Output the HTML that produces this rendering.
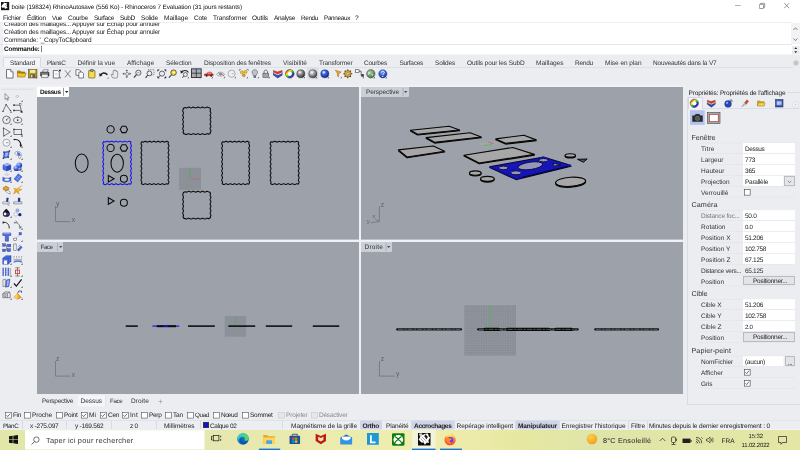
<!DOCTYPE html>
<html lang="fr"><head><meta charset="utf-8"><title>boite - Rhinoceros 7</title>
<style>
html,body{margin:0;padding:0;}
body{width:800px;height:450px;overflow:hidden;position:relative;background:#fff;font-family:"Liberation Sans", sans-serif;}
#r{position:absolute;left:0;top:0;width:800px;height:450px;overflow:hidden;will-change:transform;}
#r div,#r span,#r svg{position:absolute;}
#r span{white-space:nowrap;line-height:1;text-rendering:geometricPrecision;}
#r svg{overflow:visible;}
#r svg text{font-family:"Liberation Sans", sans-serif;}
#r svg.b{filter:blur(0.28px);}
</style></head><body><div id="r">
<svg style="left:0px;top:0px" width="800" height="55"><rect x="0.00" y="0.00" width="800.00" height="54.50" fill="#fff"/></svg>
<svg class="b" style="left:0.9px;top:1.6px;" width="8.2" height="8.2" viewBox="0 0 9 9"><rect x="0" y="0" width="9" height="9" fill="#161616"/><path d="M0.4 5.6C0.8 3.6 1.8 2.2 3.2 1.4L2.8 0.3L4.6 1.1C5.6 0.9 6.4 1.2 7 1.9L6 2.6C6.6 3.4 6.6 4.4 6.2 5.2L7.6 6.8L6.2 6.6L4.4 7.6L3.8 6L1.6 6.4Z" fill="#fff"/><path d="M4.6 3.2L5.6 3.6L4.8 4.2Z" fill="#161616"/></svg>
<span style="left:11.5px;top:5px;font-size:6.35px;letter-spacing:-0.104px;color:#111;">boite (198324) RhinoAutosave (556 Ko) - Rhinoceros 7 Evaluation (31 jours restants)</span>
<svg style="left:735px;top:5px" width="6" height="1"><rect x="0.00" y="0.15" width="5.70" height="0.55" fill="#777"/></svg>
<svg class="b" style="left:759px;top:3.2px;" width="6" height="6" viewBox="0 0 6 6"><rect x="0.3" y="1.3" width="4.2" height="4.2" rx="0.5" fill="none" stroke="#555" stroke-width="0.6"/><path d="M1.4 1.3V0.9Q1.4 0.3 2 0.3H5.1Q5.7 0.3 5.7 0.9V4Q5.7 4.6 5.1 4.6H4.5" fill="none" stroke="#555" stroke-width="0.6"/></svg>
<svg class="b" style="left:784px;top:3.2px;" width="5.4" height="5.4" viewBox="0 0 5.4 5.4"><path d="M0.2 0.2L5.2 5.2M5.2 0.2L0.2 5.2" stroke="#555" stroke-width="0.6"/></svg>
<span style="left:4px;top:22px;font-size:6.5px;letter-spacing:-0.189px;color:#222;">Création des maillages... Appuyer sur Échap pour annuler</span>
<svg style="left:0px;top:11px" width="800" height="12"><rect x="0.00" y="0.00" width="800.00" height="11.50" fill="#fff"/></svg>
<span style="left:3px;top:16px;font-size:6.5px;letter-spacing:-0.217px;color:#111;">Fichier</span>
<span style="left:27px;top:16px;font-size:6.5px;letter-spacing:-0.125px;color:#111;">Édition</span>
<span style="left:52px;top:16px;font-size:6.32px;letter-spacing:-0.340px;color:#111;">Vue</span>
<span style="left:68px;top:16px;font-size:6.5px;letter-spacing:-0.221px;color:#111;">Courbe</span>
<span style="left:94px;top:16px;font-size:6.49px;letter-spacing:-0.340px;color:#111;">Surface</span>
<span style="left:120px;top:16px;font-size:6.5px;letter-spacing:-0.316px;color:#111;">SubD</span>
<span style="left:141px;top:16px;font-size:6.5px;letter-spacing:-0.180px;color:#111;">Solide</span>
<span style="left:164px;top:16px;font-size:6.5px;letter-spacing:-0.027px;color:#111;">Maillage</span>
<span style="left:194px;top:16px;font-size:6.5px;letter-spacing:-0.184px;color:#111;">Cote</span>
<span style="left:213px;top:16px;font-size:6.5px;letter-spacing:-0.105px;color:#111;">Transformer</span>
<span style="left:252px;top:16px;font-size:6.5px;letter-spacing:-0.104px;color:#111;">Outils</span>
<span style="left:274px;top:16px;font-size:6.5px;letter-spacing:-0.304px;color:#111;">Analyse</span>
<span style="left:301px;top:16px;font-size:6.35px;letter-spacing:-0.340px;color:#111;">Rendu</span>
<span style="left:324px;top:16px;font-size:6.38px;letter-spacing:-0.340px;color:#111;">Panneaux</span>
<span style="left:355px;top:16px;font-size:6.5px;letter-spacing:0.175px;color:#111;">?</span>
<svg style="left:0px;top:22px" width="792" height="1"><rect x="0.00" y="0.30" width="792.00" height="0.50" fill="#d9dce6"/></svg>
<svg style="left:0px;top:22px" width="3" height="33"><rect x="0.00" y="0.60" width="2.70" height="32.00" fill="#eff1f6"/></svg>
<svg style="left:2px;top:22px" width="2" height="33"><rect x="0.60" y="0.60" width="0.50" height="32.00" fill="#dde1ec"/></svg>
<span style="left:4px;top:30px;font-size:6.5px;letter-spacing:-0.189px;color:#222;">Création des maillages... Appuyer sur Échap pour annuler</span>
<span style="left:4px;top:38px;font-size:6.5px;letter-spacing:-0.164px;color:#222;">Commande: &#x27;_CopyToClipboard</span>
<svg style="left:0px;top:44px" width="792" height="1"><rect x="0.00" y="0.20" width="792.00" height="0.60" fill="#d3d7e3"/></svg>
<span style="left:4px;top:47px;font-size:6.5px;letter-spacing:-0.229px;color:#111;font-weight:bold;">Commande:</span>
<svg style="left:41px;top:45px" width="1" height="8"><rect x="0.00" y="0.80" width="0.60" height="6.50" fill="#333"/></svg>
<svg style="left:791px;top:22px" width="9" height="23"><rect x="0.00" y="0.80" width="9.00" height="21.50" fill="#f3f3f5"/></svg>
<svg class="b" style="left:792.5px;top:26.5px;" width="5" height="3.4" viewBox="0 0 5 3.4"><path d="M0.5 2.9L2.5 0.8L4.5 2.9" fill="none" stroke="#444" stroke-width="0.65"/></svg>
<svg class="b" style="left:792.5px;top:37.8px;" width="5" height="3.4" viewBox="0 0 5 3.4"><path d="M0.5 0.5L2.5 2.6L4.5 0.5" fill="none" stroke="#444" stroke-width="0.65"/></svg>
<svg class="b" style="left:791.5px;top:45.6px;" width="7.5" height="8" viewBox="0 0 7.5 8"><rect x="0" y="0" width="7.5" height="8" fill="#e9eaee"/><path d="M0 4H7.5" stroke="#fff" stroke-width="0.5"/><path d="M2.3 2.9L3.75 1.2L5.2 2.9Z M2.3 5.2L3.75 6.9L5.2 5.2Z" fill="#222"/></svg>
<svg style="left:0px;top:54px" width="800" height="33"><rect x="0.00" y="0.50" width="800.00" height="32.50" fill="#ecedf1"/></svg>
<div style="left:2.5px;top:57.2px;width:38.5px;height:10.3px;background:#f4f5f8;border:0.5px solid #d5d9e4;border-bottom:none;border-radius:1.5px 1.5px 0 0;box-sizing:border-box;"></div>
<svg style="left:41px;top:67px" width="752" height="1"><rect x="0.00" y="0.20" width="752.00" height="0.50" fill="#cdd2df"/></svg>
<span style="left:10px;top:61px;font-size:6.5px;letter-spacing:-0.174px;color:#333;">Standard</span>
<span style="left:47px;top:61px;font-size:6.37px;letter-spacing:-0.340px;color:#333;">PlansC</span>
<span style="left:77.5px;top:61px;font-size:6.5px;letter-spacing:-0.031px;color:#333;">Définir la vue</span>
<span style="left:127px;top:61px;font-size:6.5px;letter-spacing:0.002px;color:#333;">Affichage</span>
<span style="left:166px;top:61px;font-size:6.5px;letter-spacing:-0.139px;color:#333;">Sélection</span>
<span style="left:204px;top:61px;font-size:6.5px;letter-spacing:-0.099px;color:#333;">Disposition des fenêtres</span>
<span style="left:283px;top:61px;font-size:6.5px;letter-spacing:0.027px;color:#333;">Visibilité</span>
<span style="left:319px;top:61px;font-size:6.5px;letter-spacing:-0.151px;color:#333;">Transformer</span>
<span style="left:364px;top:61px;font-size:6.5px;letter-spacing:-0.225px;color:#333;">Courbes</span>
<span style="left:399.5px;top:61px;font-size:6.5px;letter-spacing:-0.270px;color:#333;">Surfaces</span>
<span style="left:435px;top:61px;font-size:6.5px;letter-spacing:-0.190px;color:#333;">Solides</span>
<span style="left:467px;top:61px;font-size:6.5px;letter-spacing:-0.106px;color:#333;">Outils pour les SubD</span>
<span style="left:536px;top:61px;font-size:6.5px;letter-spacing:0.003px;color:#333;">Maillages</span>
<span style="left:575px;top:61px;font-size:6.5px;letter-spacing:-0.231px;color:#333;">Rendu</span>
<span style="left:605px;top:61px;font-size:6.5px;letter-spacing:-0.030px;color:#333;">Mise en plan</span>
<span style="left:653px;top:61px;font-size:6.5px;letter-spacing:-0.177px;color:#333;">Nouveautés dans la V7</span>
<svg class="b" style="left:792.5px;top:59.5px;" width="6" height="6" viewBox="0 0 6 6"><circle cx="3" cy="3" r="2.2" fill="#ddd" stroke="#999" stroke-width="0.5"/><circle cx="3" cy="3" r="0.8" fill="#999"/></svg>
<svg style="left:0px;top:85px" width="686" height="3"><rect x="0.00" y="0.20" width="686.00" height="2.20" fill="#f0f1f5"/></svg>
<svg style="left:0px;top:87px" width="37" height="309"><rect x="0.00" y="0.00" width="37.00" height="309.00" fill="#ecedf1"/></svg>
<svg style="left:1px;top:88px" width="33" height="2"><rect x="0.50" y="0.90" width="32.00" height="0.50" fill="#c6ccdc"/></svg>
<svg style="left:37px;top:87px" width="646" height="307"><rect x="0.00" y="0.00" width="646.00" height="307.00" fill="#f0f1f6"/></svg>
<svg style="left:37px;top:87px" width="322" height="153"><rect x="0.00" y="0.00" width="322.00" height="152.60" fill="#9da2aa"/></svg>
<svg style="left:361px;top:87px" width="322" height="153"><rect x="0.00" y="0.00" width="322.00" height="152.60" fill="#9da2aa"/></svg>
<svg style="left:37px;top:242px" width="322" height="152"><rect x="0.00" y="0.00" width="322.00" height="152.00" fill="#9da2aa"/></svg>
<svg style="left:361px;top:242px" width="322" height="152"><rect x="0.00" y="0.00" width="322.00" height="152.00" fill="#9da2aa"/></svg>
<svg style="left:0px;top:0px;" width="800" height="450" viewBox="0 0 800 450"><rect x="179" y="167.8" width="22" height="22" fill="#8c9199"/><path d="M190 168V179" stroke="#4caf50" stroke-width="0.7"/><path d="M190 179H201" stroke="#c66" stroke-width="0.7"/><ellipse cx="81.7" cy="163.2" rx="6.4" ry="9.2" fill="none" stroke="#0a0a0a" stroke-width="1.05"/><circle cx="110.6" cy="129.4" r="3.6" fill="none" stroke="#0a0a0a" stroke-width="1.05"/><path d="M127.60 129.40L125.75 132.60L122.05 132.60L120.20 129.40L122.05 126.20L125.75 126.20Z" fill="none" stroke="#0a0a0a" stroke-width="1.05"/><path d="M104.00 141.60L104.61 141.92L105.22 142.01L105.83 141.81L106.44 141.45L107.05 141.20L107.66 141.24L108.27 141.54L108.87 141.88L109.48 142.02L110.09 141.86L110.70 141.51L111.31 141.23L111.92 141.21L112.53 141.48L113.14 141.83L113.75 142.02L114.36 141.90L114.97 141.57L115.58 141.26L116.19 141.19L116.80 141.42L117.40 141.78L118.01 142.01L118.62 141.94L119.23 141.63L119.84 141.30L120.45 141.18L121.06 141.37L121.67 141.72L122.28 141.99L122.89 141.97L123.50 141.69L124.11 141.34L124.72 141.18L125.33 141.32L125.93 141.66L126.54 141.96L127.15 142.00L127.76 141.75L128.37 141.39L128.98 141.19L129.59 141.28L130.20 141.60Q131.00 141.60 131.00 142.40L130.69 143.00L130.58 143.61L130.75 144.21L131.08 144.81L131.36 145.41L131.40 146.02L131.19 146.62L130.85 147.22L130.61 147.83L130.62 148.43L130.89 149.03L131.22 149.64L131.41 150.24L131.34 150.84L131.04 151.44L130.72 152.05L130.58 152.65L130.72 153.25L131.04 153.86L131.34 154.46L131.41 155.06L131.22 155.66L130.89 156.27L130.62 156.87L130.61 157.47L130.85 158.08L131.19 158.68L131.40 159.28L131.36 159.89L131.08 160.49L130.75 161.09L130.58 161.69L130.69 162.30L131.00 162.90L131.31 163.50L131.42 164.11L131.25 164.71L130.92 165.31L130.64 165.91L130.60 166.52L130.81 167.12L131.15 167.72L131.39 168.33L131.38 168.93L131.11 169.53L130.78 170.14L130.59 170.74L130.66 171.34L130.96 171.94L131.28 172.55L131.42 173.15L131.28 173.75L130.96 174.36L130.66 174.96L130.59 175.56L130.78 176.16L131.11 176.77L131.38 177.37L131.39 177.97L131.15 178.58L130.81 179.18L130.60 179.78L130.64 180.39L130.92 180.99L131.25 181.59L131.42 182.19L131.31 182.80L131.00 183.40Q131.00 184.20 130.20 184.20L129.59 183.88L128.98 183.79L128.37 183.99L127.76 184.35L127.15 184.60L126.54 184.56L125.93 184.26L125.33 183.92L124.72 183.78L124.11 183.94L123.50 184.29L122.89 184.57L122.28 184.59L121.67 184.32L121.06 183.97L120.45 183.78L119.84 183.90L119.23 184.23L118.62 184.54L118.01 184.61L117.40 184.38L116.80 184.02L116.19 183.79L115.58 183.86L114.97 184.17L114.36 184.50L113.75 184.62L113.14 184.43L112.53 184.08L111.92 183.81L111.31 183.83L110.70 184.11L110.09 184.46L109.48 184.62L108.87 184.48L108.27 184.14L107.66 183.84L107.05 183.80L106.44 184.05L105.83 184.41L105.22 184.61L104.61 184.52L104.00 184.20Q103.20 184.20 103.20 183.40L103.51 182.80L103.62 182.19L103.45 181.59L103.12 180.99L102.84 180.39L102.80 179.78L103.01 179.18L103.35 178.58L103.59 177.97L103.58 177.37L103.31 176.77L102.98 176.16L102.79 175.56L102.86 174.96L103.16 174.36L103.48 173.75L103.62 173.15L103.48 172.55L103.16 171.94L102.86 171.34L102.79 170.74L102.98 170.14L103.31 169.53L103.58 168.93L103.59 168.33L103.35 167.72L103.01 167.12L102.80 166.52L102.84 165.91L103.12 165.31L103.45 164.71L103.62 164.11L103.51 163.50L103.20 162.90L102.89 162.30L102.78 161.69L102.95 161.09L103.28 160.49L103.56 159.89L103.60 159.28L103.39 158.68L103.05 158.08L102.81 157.47L102.82 156.87L103.09 156.27L103.42 155.66L103.61 155.06L103.54 154.46L103.24 153.86L102.92 153.25L102.78 152.65L102.92 152.05L103.24 151.44L103.54 150.84L103.61 150.24L103.42 149.64L103.09 149.03L102.82 148.43L102.81 147.83L103.05 147.22L103.39 146.62L103.60 146.02L103.56 145.41L103.28 144.81L102.95 144.21L102.78 143.61L102.89 143.00L103.20 142.40Q103.20 141.60 104.00 141.60Z" fill="none" stroke="#1414f0" stroke-width="1.05"/><circle cx="110.6" cy="147.9" r="3.6" fill="none" stroke="#0a0a0a" stroke-width="1.05"/><path d="M127.60 147.90L125.75 151.10L122.05 151.10L120.20 147.90L122.05 144.70L125.75 144.70Z" fill="none" stroke="#0a0a0a" stroke-width="1.05"/><ellipse cx="117.2" cy="163.2" rx="6.2" ry="9" fill="none" stroke="#0a0a0a" stroke-width="1.05"/><path d="M108.33 175.50L114.10 178.80L108.33 182.10Z" fill="none" stroke="#0a0a0a" stroke-width="1.05"/><circle cx="123.9" cy="178.8" r="3.5" fill="none" stroke="#0a0a0a" stroke-width="1.05"/><path d="M108.33 197.70L114.10 201.00L108.33 204.30Z" fill="none" stroke="#0a0a0a" stroke-width="1.05"/><circle cx="123.9" cy="202.8" r="3.5" fill="none" stroke="#0a0a0a" stroke-width="1.05"/><path d="M142.20 141.70L142.81 142.03L143.41 142.11L144.02 141.88L144.63 141.52L145.24 141.29L145.84 141.37L146.45 141.70L147.06 142.03L147.66 142.11L148.27 141.88L148.88 141.52L149.49 141.29L150.09 141.37L150.70 141.70L151.31 142.03L151.91 142.11L152.52 141.88L153.13 141.52L153.74 141.29L154.34 141.37L154.95 141.70L155.56 142.03L156.16 142.11L156.77 141.88L157.38 141.52L157.99 141.29L158.59 141.37L159.20 141.70L159.81 142.03L160.41 142.11L161.02 141.88L161.63 141.52L162.24 141.29L162.84 141.37L163.45 141.70L164.06 142.03L164.66 142.11L165.27 141.88L165.88 141.52L166.49 141.29L167.09 141.37L167.70 141.70Q168.50 141.70 168.50 142.50L168.19 143.10L168.08 143.70L168.25 144.30L168.58 144.90L168.86 145.50L168.90 146.10L168.69 146.70L168.35 147.30L168.11 147.90L168.12 148.50L168.39 149.10L168.72 149.70L168.91 150.30L168.84 150.90L168.54 151.50L168.22 152.10L168.08 152.70L168.22 153.30L168.54 153.90L168.84 154.50L168.91 155.10L168.72 155.70L168.39 156.30L168.12 156.90L168.11 157.50L168.35 158.10L168.69 158.70L168.90 159.30L168.86 159.90L168.58 160.50L168.25 161.10L168.08 161.70L168.19 162.30L168.50 162.90L168.81 163.50L168.92 164.10L168.75 164.70L168.42 165.30L168.14 165.90L168.10 166.50L168.31 167.10L168.65 167.70L168.89 168.30L168.88 168.90L168.61 169.50L168.28 170.10L168.09 170.70L168.16 171.30L168.46 171.90L168.78 172.50L168.92 173.10L168.78 173.70L168.46 174.30L168.16 174.90L168.09 175.50L168.28 176.10L168.61 176.70L168.88 177.30L168.89 177.90L168.65 178.50L168.31 179.10L168.10 179.70L168.14 180.30L168.42 180.90L168.75 181.50L168.92 182.10L168.81 182.70L168.50 183.30Q168.50 184.10 167.70 184.10L167.09 183.77L166.49 183.69L165.88 183.92L165.27 184.28L164.66 184.51L164.06 184.43L163.45 184.10L162.84 183.77L162.24 183.69L161.63 183.92L161.02 184.28L160.41 184.51L159.81 184.43L159.20 184.10L158.59 183.77L157.99 183.69L157.38 183.92L156.77 184.28L156.16 184.51L155.56 184.43L154.95 184.10L154.34 183.77L153.74 183.69L153.13 183.92L152.52 184.28L151.91 184.51L151.31 184.43L150.70 184.10L150.09 183.77L149.49 183.69L148.88 183.92L148.27 184.28L147.66 184.51L147.06 184.43L146.45 184.10L145.84 183.77L145.24 183.69L144.63 183.92L144.02 184.28L143.41 184.51L142.81 184.43L142.20 184.10Q141.40 184.10 141.40 183.30L141.71 182.70L141.82 182.10L141.65 181.50L141.32 180.90L141.04 180.30L141.00 179.70L141.21 179.10L141.55 178.50L141.79 177.90L141.78 177.30L141.51 176.70L141.18 176.10L140.99 175.50L141.06 174.90L141.36 174.30L141.68 173.70L141.82 173.10L141.68 172.50L141.36 171.90L141.06 171.30L140.99 170.70L141.18 170.10L141.51 169.50L141.78 168.90L141.79 168.30L141.55 167.70L141.21 167.10L141.00 166.50L141.04 165.90L141.32 165.30L141.65 164.70L141.82 164.10L141.71 163.50L141.40 162.90L141.09 162.30L140.98 161.70L141.15 161.10L141.48 160.50L141.76 159.90L141.80 159.30L141.59 158.70L141.25 158.10L141.01 157.50L141.02 156.90L141.29 156.30L141.62 155.70L141.81 155.10L141.74 154.50L141.44 153.90L141.12 153.30L140.98 152.70L141.12 152.10L141.44 151.50L141.74 150.90L141.81 150.30L141.62 149.70L141.29 149.10L141.02 148.50L141.01 147.90L141.25 147.30L141.59 146.70L141.80 146.10L141.76 145.50L141.48 144.90L141.15 144.30L140.98 143.70L141.09 143.10L141.40 142.50Q141.40 141.70 142.20 141.70Z" fill="none" stroke="#0a0a0a" stroke-width="1.05"/><path d="M185.30 107.50L185.91 107.81L186.51 107.92L187.12 107.76L187.72 107.43L188.33 107.15L188.93 107.09L189.54 107.30L190.14 107.64L190.75 107.88L191.35 107.88L191.96 107.64L192.56 107.30L193.17 107.09L193.77 107.15L194.38 107.43L194.98 107.76L195.59 107.92L196.19 107.81L196.80 107.50L197.41 107.19L198.01 107.08L198.62 107.24L199.22 107.57L199.83 107.85L200.43 107.91L201.04 107.70L201.64 107.36L202.25 107.12L202.85 107.12L203.46 107.36L204.06 107.70L204.67 107.91L205.27 107.85L205.88 107.57L206.48 107.24L207.09 107.08L207.69 107.19L208.30 107.50Q210.50 107.50 210.50 109.70L210.18 110.32L210.09 110.93L210.29 111.55L210.64 112.17L210.89 112.78L210.86 113.40L210.57 114.02L210.23 114.63L210.08 115.25L210.23 115.87L210.57 116.48L210.86 117.10L210.89 117.72L210.64 118.33L210.29 118.95L210.09 119.57L210.18 120.18L210.50 120.80L210.82 121.42L210.91 122.03L210.71 122.65L210.36 123.27L210.11 123.88L210.14 124.50L210.43 125.12L210.77 125.73L210.92 126.35L210.77 126.97L210.43 127.58L210.14 128.20L210.11 128.82L210.36 129.43L210.71 130.05L210.91 130.67L210.82 131.28L210.50 131.90Q210.50 134.10 208.30 134.10L207.69 133.79L207.09 133.68L206.48 133.84L205.88 134.17L205.27 134.45L204.67 134.51L204.06 134.30L203.46 133.96L202.85 133.72L202.25 133.72L201.64 133.96L201.04 134.30L200.43 134.51L199.83 134.45L199.22 134.17L198.62 133.84L198.01 133.68L197.41 133.79L196.80 134.10L196.19 134.41L195.59 134.52L194.98 134.36L194.38 134.03L193.77 133.75L193.17 133.69L192.56 133.90L191.96 134.24L191.35 134.48L190.75 134.48L190.14 134.24L189.54 133.90L188.93 133.69L188.33 133.75L187.72 134.03L187.12 134.36L186.51 134.52L185.91 134.41L185.30 134.10Q183.10 134.10 183.10 131.90L183.42 131.28L183.51 130.67L183.31 130.05L182.96 129.43L182.71 128.82L182.74 128.20L183.03 127.58L183.37 126.97L183.52 126.35L183.37 125.73L183.03 125.12L182.74 124.50L182.71 123.88L182.96 123.27L183.31 122.65L183.51 122.03L183.42 121.42L183.10 120.80L182.78 120.18L182.69 119.57L182.89 118.95L183.24 118.33L183.49 117.72L183.46 117.10L183.17 116.48L182.83 115.87L182.68 115.25L182.83 114.63L183.17 114.02L183.46 113.40L183.49 112.78L183.24 112.17L182.89 111.55L182.69 110.93L182.78 110.32L183.10 109.70Q183.10 107.50 185.30 107.50Z" fill="none" stroke="#0a0a0a" stroke-width="1.05"/><path d="M185.30 191.70L185.91 192.01L186.51 192.12L187.12 191.96L187.72 191.63L188.33 191.35L188.93 191.29L189.54 191.50L190.14 191.84L190.75 192.08L191.35 192.08L191.96 191.84L192.56 191.50L193.17 191.29L193.77 191.35L194.38 191.63L194.98 191.96L195.59 192.12L196.19 192.01L196.80 191.70L197.41 191.39L198.01 191.28L198.62 191.44L199.22 191.77L199.83 192.05L200.43 192.11L201.04 191.90L201.64 191.56L202.25 191.32L202.85 191.32L203.46 191.56L204.06 191.90L204.67 192.11L205.27 192.05L205.88 191.77L206.48 191.44L207.09 191.28L207.69 191.39L208.30 191.70Q210.50 191.70 210.50 193.90L210.18 194.51L210.08 195.12L210.26 195.72L210.61 196.33L210.88 196.94L210.89 197.55L210.64 198.16L210.30 198.76L210.09 199.37L210.16 199.98L210.46 200.59L210.79 201.20L210.92 201.81L210.76 202.41L210.43 203.02L210.14 203.63L210.10 204.24L210.33 204.85L210.67 205.45L210.90 206.06L210.86 206.67L210.57 207.28L210.24 207.89L210.08 208.49L210.21 209.10L210.54 209.71L210.84 210.32L210.91 210.93L210.70 211.54L210.36 212.14L210.11 212.75L210.12 213.36L210.39 213.97L210.74 214.58L210.92 215.18L210.82 215.79L210.50 216.40Q210.50 218.60 208.30 218.60L207.69 218.29L207.09 218.18L206.48 218.34L205.88 218.67L205.27 218.95L204.67 219.01L204.06 218.80L203.46 218.46L202.85 218.22L202.25 218.22L201.64 218.46L201.04 218.80L200.43 219.01L199.83 218.95L199.22 218.67L198.62 218.34L198.01 218.18L197.41 218.29L196.80 218.60L196.19 218.91L195.59 219.02L194.98 218.86L194.38 218.53L193.77 218.25L193.17 218.19L192.56 218.40L191.96 218.74L191.35 218.98L190.75 218.98L190.14 218.74L189.54 218.40L188.93 218.19L188.33 218.25L187.72 218.53L187.12 218.86L186.51 219.02L185.91 218.91L185.30 218.60Q183.10 218.60 183.10 216.40L183.42 215.79L183.52 215.18L183.34 214.58L182.99 213.97L182.72 213.36L182.71 212.75L182.96 212.14L183.30 211.54L183.51 210.93L183.44 210.32L183.14 209.71L182.81 209.10L182.68 208.49L182.84 207.89L183.17 207.28L183.46 206.67L183.50 206.06L183.27 205.45L182.93 204.85L182.70 204.24L182.74 203.63L183.03 203.02L183.36 202.41L183.52 201.81L183.39 201.20L183.06 200.59L182.76 199.98L182.69 199.37L182.90 198.76L183.24 198.16L183.49 197.55L183.48 196.94L183.21 196.33L182.86 195.72L182.68 195.12L182.78 194.51L183.10 193.90Q183.10 191.70 185.30 191.70Z" fill="none" stroke="#0a0a0a" stroke-width="1.05"/><path d="M222.90 141.70L223.51 142.03L224.11 142.11L224.72 141.88L225.33 141.52L225.94 141.29L226.54 141.37L227.15 141.70L227.76 142.03L228.36 142.11L228.97 141.88L229.58 141.52L230.19 141.29L230.79 141.37L231.40 141.70L232.01 142.03L232.61 142.11L233.22 141.88L233.83 141.52L234.44 141.29L235.04 141.37L235.65 141.70L236.26 142.03L236.86 142.11L237.47 141.88L238.08 141.52L238.69 141.29L239.29 141.37L239.90 141.70L240.51 142.03L241.11 142.11L241.72 141.88L242.33 141.52L242.94 141.29L243.54 141.37L244.15 141.70L244.76 142.03L245.36 142.11L245.97 141.88L246.58 141.52L247.19 141.29L247.79 141.37L248.40 141.70Q249.20 141.70 249.20 142.50L248.89 143.10L248.78 143.70L248.95 144.30L249.28 144.90L249.56 145.50L249.60 146.10L249.39 146.70L249.05 147.30L248.81 147.90L248.82 148.50L249.09 149.10L249.42 149.70L249.61 150.30L249.54 150.90L249.24 151.50L248.92 152.10L248.78 152.70L248.92 153.30L249.24 153.90L249.54 154.50L249.61 155.10L249.42 155.70L249.09 156.30L248.82 156.90L248.81 157.50L249.05 158.10L249.39 158.70L249.60 159.30L249.56 159.90L249.28 160.50L248.95 161.10L248.78 161.70L248.89 162.30L249.20 162.90L249.51 163.50L249.62 164.10L249.45 164.70L249.12 165.30L248.84 165.90L248.80 166.50L249.01 167.10L249.35 167.70L249.59 168.30L249.58 168.90L249.31 169.50L248.98 170.10L248.79 170.70L248.86 171.30L249.16 171.90L249.48 172.50L249.62 173.10L249.48 173.70L249.16 174.30L248.86 174.90L248.79 175.50L248.98 176.10L249.31 176.70L249.58 177.30L249.59 177.90L249.35 178.50L249.01 179.10L248.80 179.70L248.84 180.30L249.12 180.90L249.45 181.50L249.62 182.10L249.51 182.70L249.20 183.30Q249.20 184.10 248.40 184.10L247.79 183.77L247.19 183.69L246.58 183.92L245.97 184.28L245.36 184.51L244.76 184.43L244.15 184.10L243.54 183.77L242.94 183.69L242.33 183.92L241.72 184.28L241.11 184.51L240.51 184.43L239.90 184.10L239.29 183.77L238.69 183.69L238.08 183.92L237.47 184.28L236.86 184.51L236.26 184.43L235.65 184.10L235.04 183.77L234.44 183.69L233.83 183.92L233.22 184.28L232.61 184.51L232.01 184.43L231.40 184.10L230.79 183.77L230.19 183.69L229.58 183.92L228.97 184.28L228.36 184.51L227.76 184.43L227.15 184.10L226.54 183.77L225.94 183.69L225.33 183.92L224.72 184.28L224.11 184.51L223.51 184.43L222.90 184.10Q222.10 184.10 222.10 183.30L222.41 182.70L222.52 182.10L222.35 181.50L222.02 180.90L221.74 180.30L221.70 179.70L221.91 179.10L222.25 178.50L222.49 177.90L222.48 177.30L222.21 176.70L221.88 176.10L221.69 175.50L221.76 174.90L222.06 174.30L222.38 173.70L222.52 173.10L222.38 172.50L222.06 171.90L221.76 171.30L221.69 170.70L221.88 170.10L222.21 169.50L222.48 168.90L222.49 168.30L222.25 167.70L221.91 167.10L221.70 166.50L221.74 165.90L222.02 165.30L222.35 164.70L222.52 164.10L222.41 163.50L222.10 162.90L221.79 162.30L221.68 161.70L221.85 161.10L222.18 160.50L222.46 159.90L222.50 159.30L222.29 158.70L221.95 158.10L221.71 157.50L221.72 156.90L221.99 156.30L222.32 155.70L222.51 155.10L222.44 154.50L222.14 153.90L221.82 153.30L221.68 152.70L221.82 152.10L222.14 151.50L222.44 150.90L222.51 150.30L222.32 149.70L221.99 149.10L221.72 148.50L221.71 147.90L221.95 147.30L222.29 146.70L222.50 146.10L222.46 145.50L222.18 144.90L221.85 144.30L221.68 143.70L221.79 143.10L222.10 142.50Q222.10 141.70 222.90 141.70Z" fill="none" stroke="#0a0a0a" stroke-width="1.05"/><path d="M271.40 141.70L272.00 142.02L272.60 142.12L273.21 141.93L273.81 141.58L274.41 141.32L275.01 141.32L275.62 141.58L276.22 141.93L276.82 142.12L277.42 142.02L278.03 141.70L278.63 141.38L279.23 141.28L279.83 141.47L280.43 141.82L281.04 142.08L281.64 142.08L282.24 141.82L282.84 141.47L283.45 141.28L284.05 141.38L284.65 141.70L285.25 142.02L285.85 142.12L286.46 141.93L287.06 141.58L287.66 141.32L288.26 141.32L288.87 141.58L289.47 141.93L290.07 142.12L290.67 142.02L291.27 141.70L291.88 141.38L292.48 141.28L293.08 141.47L293.68 141.82L294.29 142.08L294.89 142.08L295.49 141.82L296.09 141.47L296.70 141.28L297.30 141.38L297.90 141.70Q298.70 141.70 298.70 142.50L298.39 143.10L298.28 143.70L298.45 144.30L298.78 144.90L299.06 145.50L299.10 146.10L298.89 146.70L298.55 147.30L298.31 147.90L298.32 148.50L298.59 149.10L298.92 149.70L299.11 150.30L299.04 150.90L298.74 151.50L298.42 152.10L298.28 152.70L298.42 153.30L298.74 153.90L299.04 154.50L299.11 155.10L298.92 155.70L298.59 156.30L298.32 156.90L298.31 157.50L298.55 158.10L298.89 158.70L299.10 159.30L299.06 159.90L298.78 160.50L298.45 161.10L298.28 161.70L298.39 162.30L298.70 162.90L299.01 163.50L299.12 164.10L298.95 164.70L298.62 165.30L298.34 165.90L298.30 166.50L298.51 167.10L298.85 167.70L299.09 168.30L299.08 168.90L298.81 169.50L298.48 170.10L298.29 170.70L298.36 171.30L298.66 171.90L298.98 172.50L299.12 173.10L298.98 173.70L298.66 174.30L298.36 174.90L298.29 175.50L298.48 176.10L298.81 176.70L299.08 177.30L299.09 177.90L298.85 178.50L298.51 179.10L298.30 179.70L298.34 180.30L298.62 180.90L298.95 181.50L299.12 182.10L299.01 182.70L298.70 183.30Q298.70 184.10 297.90 184.10L297.30 183.78L296.70 183.68L296.09 183.87L295.49 184.22L294.89 184.48L294.29 184.48L293.68 184.22L293.08 183.87L292.48 183.68L291.88 183.78L291.27 184.10L290.67 184.42L290.07 184.52L289.47 184.33L288.87 183.98L288.26 183.72L287.66 183.72L287.06 183.98L286.46 184.33L285.85 184.52L285.25 184.42L284.65 184.10L284.05 183.78L283.45 183.68L282.84 183.87L282.24 184.22L281.64 184.48L281.04 184.48L280.43 184.22L279.83 183.87L279.23 183.68L278.63 183.78L278.03 184.10L277.42 184.42L276.82 184.52L276.22 184.33L275.62 183.98L275.01 183.72L274.41 183.72L273.81 183.98L273.21 184.33L272.60 184.52L272.00 184.42L271.40 184.10Q270.60 184.10 270.60 183.30L270.91 182.70L271.02 182.10L270.85 181.50L270.52 180.90L270.24 180.30L270.20 179.70L270.41 179.10L270.75 178.50L270.99 177.90L270.98 177.30L270.71 176.70L270.38 176.10L270.19 175.50L270.26 174.90L270.56 174.30L270.88 173.70L271.02 173.10L270.88 172.50L270.56 171.90L270.26 171.30L270.19 170.70L270.38 170.10L270.71 169.50L270.98 168.90L270.99 168.30L270.75 167.70L270.41 167.10L270.20 166.50L270.24 165.90L270.52 165.30L270.85 164.70L271.02 164.10L270.91 163.50L270.60 162.90L270.29 162.30L270.18 161.70L270.35 161.10L270.68 160.50L270.96 159.90L271.00 159.30L270.79 158.70L270.45 158.10L270.21 157.50L270.22 156.90L270.49 156.30L270.82 155.70L271.01 155.10L270.94 154.50L270.64 153.90L270.32 153.30L270.18 152.70L270.32 152.10L270.64 151.50L270.94 150.90L271.01 150.30L270.82 149.70L270.49 149.10L270.22 148.50L270.21 147.90L270.45 147.30L270.79 146.70L271.00 146.10L270.96 145.50L270.68 144.90L270.35 144.30L270.18 143.70L270.29 143.10L270.60 142.50Q270.60 141.70 271.40 141.70Z" fill="none" stroke="#0a0a0a" stroke-width="1.05"/><path d="M55.5 206V221.6H70.4" fill="none" stroke="#696e76" stroke-width="0.7"/><text x="56" y="205.6" font-size="6.8" fill="#5e636b">y</text><text x="71.8" y="222.2" font-size="6.8" fill="#5e636b">x</text><path d="M477.5 143.40L493.5 140.80L502.5 143.60L485.5 147.40Z" fill="#a0a7a7" stroke="none"/><path d="M488 142.1L493.6 143.5" stroke="#d05858" stroke-width="0.7"/><path d="M483.6 145.6L492.4 144.8" stroke="#50b050" stroke-width="0.7"/><path d="M410.5 131.00L449.1 127.10L459.6 130.80L417.6 135.00Z" fill="#080808" stroke="#080808" stroke-width="1.15" stroke-linejoin="round"/><path d="M410.5 130.20L449.1 126.30L459.6 130.00L417.6 134.20Z" fill="#a7a7a7" stroke="#080808" stroke-width="1.15" stroke-linejoin="round"/><path d="M426.2 138.40L470.1 133.60L481.3 137.80L434.6 143.10Z" fill="#080808" stroke="#080808" stroke-width="1.15" stroke-linejoin="round"/><path d="M426.2 137.60L470.1 132.80L481.3 137.00L434.6 142.30Z" fill="#a7a7a7" stroke="#080808" stroke-width="1.15" stroke-linejoin="round"/><path d="M398.4 150.70L433.3 146.80L444.6 152.00L407.1 157.80Z" fill="#080808" stroke="#080808" stroke-width="1.15" stroke-linejoin="round"/><path d="M398.4 149.90L433.3 146.00L444.6 151.20L407.1 157.00Z" fill="#a7a7a7" stroke="#080808" stroke-width="1.15" stroke-linejoin="round"/><path d="M495.8 139.70L523.9 136.00L536.2 140.70L505.5 144.10Z" fill="#080808" stroke="#080808" stroke-width="1.15" stroke-linejoin="round"/><path d="M495.8 138.90L523.9 135.20L536.2 139.90L505.5 143.30Z" fill="#a7a7a7" stroke="#080808" stroke-width="1.15" stroke-linejoin="round"/><path d="M464 156.00L512.8 148.30L534.4 155.20L479.2 163.80Z" fill="#080808" stroke="#080808" stroke-width="1.15" stroke-linejoin="round"/><path d="M464 155.20L512.8 147.50L534.4 154.40L479.2 163.00Z" fill="#a7a7a7" stroke="#080808" stroke-width="1.15" stroke-linejoin="round"/><path d="M489.7 167.50L543.5 157.80L571.1 166.20L516 179.60Z" fill="#06063a" stroke="#06063a" stroke-width="1.1" stroke-linejoin="round"/><path d="M489.7 166.70L543.5 157.00L571.1 165.40L516 178.80Z" fill="#1616b8" stroke="#06062e" stroke-width="1" stroke-linejoin="round"/><path d="M489.7 166.7L516 178.8L522 177.4" fill="none" stroke="#1a1ae8" stroke-width="0.7"/><path d="M540 157.6L543.5 157L548 158.4" fill="none" stroke="#1a1ae8" stroke-width="0.8"/><path d="M568 164.5L571.1 165.4L568 166.2" fill="none" stroke="#1a1ae8" stroke-width="0.8"/><ellipse cx="530.4" cy="165.8" rx="12.4" ry="3.7" transform="rotate(-8 530.4 165.8)" fill="#9696ba" stroke="#0a0a34" stroke-width="0.9"/><ellipse cx="503.4" cy="167.9" rx="4.6" ry="1.8" fill="#9696ba" stroke="#0a0a34" stroke-width="0.9"/><ellipse cx="516" cy="172.8" rx="5.2" ry="2" fill="#9696ba" stroke="#0a0a34" stroke-width="0.9"/><ellipse cx="543.5" cy="160.2" rx="4.6" ry="1.7" fill="#9696ba" stroke="#0a0a34" stroke-width="0.9"/><path d="M552.6 163.2L561 164.8L554.5 166.2Z" fill="#9696ba" stroke="#0a0a34" stroke-width="0.9"/><ellipse cx="475.3" cy="173.8" rx="5.8" ry="2.2" fill="#080808" stroke="#080808" stroke-width="1.15" stroke-linejoin="round"/><ellipse cx="475.3" cy="173" rx="5.8" ry="2.2" fill="#a7a7a7" stroke="#080808" stroke-width="1.15" stroke-linejoin="round"/><ellipse cx="487.4" cy="179.60000000000002" rx="6.8" ry="2.5" fill="#080808" stroke="#080808" stroke-width="1.15" stroke-linejoin="round"/><ellipse cx="487.4" cy="178.8" rx="6.8" ry="2.5" fill="#a7a7a7" stroke="#080808" stroke-width="1.15" stroke-linejoin="round"/><ellipse cx="570.3" cy="156.20000000000002" rx="5.2" ry="1.7" fill="#080808" stroke="#080808" stroke-width="1.15" stroke-linejoin="round"/><ellipse cx="570.3" cy="155.4" rx="5.2" ry="1.7" fill="#a7a7a7" stroke="#080808" stroke-width="1.15" stroke-linejoin="round"/><path d="M577.5 159.3L587.2 159L583.4 162.2Z" fill="#555" stroke="#080808" stroke-width="1" stroke-linejoin="round"/><ellipse cx="570.6" cy="182.60000000000002" rx="15" ry="4.6" transform="rotate(-4 570.6 181.8)" fill="#080808" stroke="#080808" stroke-width="1.15" stroke-linejoin="round"/><ellipse cx="570.6" cy="181.8" rx="15" ry="4.6" transform="rotate(-4 570.6 181.8)" fill="#a7a7a7" stroke="#080808" stroke-width="1.15" stroke-linejoin="round"/><path d="M379.4 221.5V206.2" fill="none" stroke="#696e76" stroke-width="0.7"/><path d="M379.4 221.5L374.9 218.9" fill="none" stroke="#696e76" stroke-width="0.7"/><path d="M379.4 221.5L370.6 222.8" fill="none" stroke="#696e76" stroke-width="0.7"/><text x="380.7" y="207.2" font-size="6.6" fill="#5e636b">z</text><text x="372.3" y="218.3" font-size="6" fill="#5e636b">x</text><text x="366.8" y="223.4" font-size="6" fill="#5e636b">y</text><rect x="224.7" y="316" width="21.4" height="20.7" fill="#8c9199"/><path d="M235.4 316V326" stroke="#4caf50" stroke-width="0.7"/><path d="M125.7 326.1H137.8" stroke="#060606" stroke-width="1.5"/><path d="M188 326.1H214.8" stroke="#060606" stroke-width="1.5"/><path d="M228.4 326.1H255.2" stroke="#060606" stroke-width="1.5"/><path d="M265.8 326.1H292.2" stroke="#060606" stroke-width="1.5"/><path d="M312.8 326.1H339.2" stroke="#060606" stroke-width="1.5"/><path d="M152.4 326.1H179.2" stroke="#1515e8" stroke-width="1.2"/><path d="M156.8 326.2H176" stroke="#0a0a14" stroke-width="2"/><path d="M163.4 326.1H168.1" stroke="#1515d8" stroke-width="1.6"/><path d="M55.5 361V376.1H70.4" fill="none" stroke="#696e76" stroke-width="0.7"/><text x="56" y="360.6" font-size="6.8" fill="#5e636b">z</text><text x="71.8" y="376.8" font-size="6.8" fill="#5e636b">x</text><defs><pattern id="grd" width="1.7" height="1.7" patternUnits="userSpaceOnUse"><path d="M0 0H1.7M0 0V1.7" stroke="#7b8189" stroke-width="0.55" fill="none"/></pattern></defs><rect x="464.4" y="305.1" width="51.6" height="50.4" fill="#9398a0"/><rect x="464.4" y="305.1" width="51.6" height="50.4" fill="url(#grd)"/><path d="M490 305.1V329" stroke="#55b055" stroke-width="0.8"/><path d="M397.2 329.4H461M478.2 329.4H577.6M595.3 329.4H658" stroke="#101010" stroke-width="2.3" stroke-linecap="round"/><path d="M485 329.4H498.8M507.4 329.4H548.8M555.7 329.4H571.8" stroke="#0a0a0a" stroke-width="3.3" stroke-linecap="round"/><path d="M398 329.4H460.5M479 329.4H577M596 329.4H657.5" stroke="#8d9299" stroke-width="0.55" stroke-dasharray="5 1.3 2.2 1.1"/><path d="M379.5 361V376.1H395" fill="none" stroke="#696e76" stroke-width="0.7"/><text x="380.8" y="360.6" font-size="6.8" fill="#5e636b">z</text><text x="396" y="375.6" font-size="6.8" fill="#5e636b">y</text></svg>
<div style="left:37px;top:87px;width:32px;height:9.8px;background:#ffffff;border-radius:0 0 1.2px 0;"></div>
<svg style="left:63px;top:87px" width="1" height="9"><rect x="0.30" y="0.80" width="0.50" height="8.00" fill="#333"/></svg>
<svg class="b" style="left:64.5px;top:90.9px;" width="3.4" height="2" viewBox="0 0 3.4 2"><path d="M0 0H3.4L1.7 2Z" fill="#1a1a1a"/></svg>
<span style="left:40px;top:90px;font-size:6.36px;letter-spacing:-0.340px;color:#0a0a0a;font-weight:bold;">Dessus</span>
<div style="left:361px;top:87px;width:47.5px;height:9.8px;background:#c9ced7;border-radius:0 0 1.2px 0;"></div>
<svg style="left:402px;top:87px" width="2" height="9"><rect x="0.80" y="0.80" width="0.50" height="8.00" fill="#8e939c"/></svg>
<svg class="b" style="left:404.0px;top:90.9px;" width="3.4" height="2" viewBox="0 0 3.4 2"><path d="M0 0H3.4L1.7 2Z" fill="#4a4f57"/></svg>
<span style="left:366px;top:90px;font-size:6.5px;letter-spacing:-0.088px;color:#333;">Perspective</span>
<div style="left:37px;top:242px;width:26px;height:9.8px;background:#c9ced7;border-radius:0 0 1.2px 0;"></div>
<svg style="left:57px;top:242px" width="1" height="9"><rect x="0.30" y="0.80" width="0.50" height="8.00" fill="#8e939c"/></svg>
<svg class="b" style="left:58.5px;top:245.9px;" width="3.4" height="2" viewBox="0 0 3.4 2"><path d="M0 0H3.4L1.7 2Z" fill="#4a4f57"/></svg>
<span style="left:40.5px;top:245px;font-size:6.23px;letter-spacing:-0.340px;color:#333;">Face</span>
<div style="left:361px;top:242px;width:30.5px;height:9.8px;background:#c9ced7;border-radius:0 0 1.2px 0;"></div>
<svg style="left:385px;top:242px" width="2" height="9"><rect x="0.80" y="0.80" width="0.50" height="8.00" fill="#8e939c"/></svg>
<svg class="b" style="left:387.0px;top:245.9px;" width="3.4" height="2" viewBox="0 0 3.4 2"><path d="M0 0H3.4L1.7 2Z" fill="#4a4f57"/></svg>
<span style="left:364.5px;top:245px;font-size:6.5px;letter-spacing:0.193px;color:#333;">Droite</span>
<svg style="left:0px;top:394px" width="686" height="36"><rect x="0.00" y="0.00" width="686.00" height="36.00" fill="#ecedf1"/></svg>
<svg style="left:77px;top:395px" width="29" height="12"><rect x="0.50" y="0.50" width="28.00" height="11.00" fill="#f4f5f8"/></svg>
<svg style="left:105px;top:395px" width="1" height="12"><rect x="0.30" y="0.50" width="0.50" height="11.00" fill="#d3d8e4"/></svg>
<span style="left:42px;top:399px;font-size:6.5px;letter-spacing:-0.270px;color:#333;">Perspective</span>
<span style="left:80.5px;top:399px;font-size:6.5px;letter-spacing:-0.031px;color:#333;">Dessus</span>
<span style="left:110px;top:399px;font-size:6.23px;letter-spacing:-0.340px;color:#333;">Face</span>
<span style="left:131px;top:399px;font-size:6.5px;letter-spacing:0.109px;color:#333;">Droite</span>
<svg class="b" style="left:157.5px;top:398.7px;" width="5" height="5" viewBox="0 0 5 5"><path d="M2.5 0.5V4.5M0.5 2.5H4.5" stroke="#999" stroke-width="0.6"/></svg>
<svg class="b" style="left:5px;top:411.6px;" width="6.6" height="6.4" viewBox="0 0 6.6 6.4"><rect x="0.3" y="0.3" width="6" height="5.8" fill="#fff" stroke="#444" stroke-width="0.55"/><path d="M1.4 3.2L2.7 4.6L5.1 1.7" fill="none" stroke="#333" stroke-width="0.7"/></svg>
<span style="left:13px;top:413px;font-size:6.49px;letter-spacing:-0.340px;color:#222;">Fin</span>
<svg class="b" style="left:24px;top:411.6px;" width="6.6" height="6.4" viewBox="0 0 6.6 6.4"><rect x="0.3" y="0.3" width="6" height="5.8" fill="#fff" stroke="#444" stroke-width="0.55"/></svg>
<span style="left:32px;top:413px;font-size:6.5px;letter-spacing:-0.102px;color:#222;">Proche</span>
<svg class="b" style="left:56px;top:411.6px;" width="6.6" height="6.4" viewBox="0 0 6.6 6.4"><rect x="0.3" y="0.3" width="6" height="5.8" fill="#fff" stroke="#444" stroke-width="0.55"/></svg>
<span style="left:64px;top:413px;font-size:6.5px;letter-spacing:-0.266px;color:#222;">Point</span>
<svg class="b" style="left:81px;top:411.6px;" width="6.6" height="6.4" viewBox="0 0 6.6 6.4"><rect x="0.3" y="0.3" width="6" height="5.8" fill="#fff" stroke="#444" stroke-width="0.55"/><path d="M1.4 3.2L2.7 4.6L5.1 1.7" fill="none" stroke="#333" stroke-width="0.7"/></svg>
<span style="left:89px;top:413px;font-size:6.5px;letter-spacing:0.070px;color:#222;">Mi</span>
<svg class="b" style="left:100px;top:411.6px;" width="6.6" height="6.4" viewBox="0 0 6.6 6.4"><rect x="0.3" y="0.3" width="6" height="5.8" fill="#fff" stroke="#444" stroke-width="0.55"/><path d="M1.4 3.2L2.7 4.6L5.1 1.7" fill="none" stroke="#333" stroke-width="0.7"/></svg>
<span style="left:108px;top:413px;font-size:6.5px;letter-spacing:-0.312px;color:#222;">Cen</span>
<svg class="b" style="left:122px;top:411.6px;" width="6.6" height="6.4" viewBox="0 0 6.6 6.4"><rect x="0.3" y="0.3" width="6" height="5.8" fill="#fff" stroke="#444" stroke-width="0.55"/><path d="M1.4 3.2L2.7 4.6L5.1 1.7" fill="none" stroke="#333" stroke-width="0.7"/></svg>
<span style="left:130px;top:413px;font-size:6.5px;letter-spacing:0.255px;color:#222;">Int</span>
<svg class="b" style="left:141px;top:411.6px;" width="6.6" height="6.4" viewBox="0 0 6.6 6.4"><rect x="0.3" y="0.3" width="6" height="5.8" fill="#fff" stroke="#444" stroke-width="0.55"/></svg>
<span style="left:149px;top:413px;font-size:6.5px;letter-spacing:-0.309px;color:#222;">Perp</span>
<svg class="b" style="left:165px;top:411.6px;" width="6.6" height="6.4" viewBox="0 0 6.6 6.4"><rect x="0.3" y="0.3" width="6" height="5.8" fill="#fff" stroke="#444" stroke-width="0.55"/></svg>
<span style="left:173px;top:413px;font-size:6.5px;letter-spacing:-0.161px;color:#222;">Tan</span>
<svg class="b" style="left:187px;top:411.6px;" width="6.6" height="6.4" viewBox="0 0 6.6 6.4"><rect x="0.3" y="0.3" width="6" height="5.8" fill="#fff" stroke="#444" stroke-width="0.55"/></svg>
<span style="left:195px;top:413px;font-size:6.28px;letter-spacing:-0.340px;color:#222;">Quad</span>
<svg class="b" style="left:213px;top:411.6px;" width="6.6" height="6.4" viewBox="0 0 6.6 6.4"><rect x="0.3" y="0.3" width="6" height="5.8" fill="#fff" stroke="#444" stroke-width="0.55"/></svg>
<span style="left:221px;top:413px;font-size:6.43px;letter-spacing:-0.340px;color:#222;">Nœud</span>
<svg class="b" style="left:242px;top:411.6px;" width="6.6" height="6.4" viewBox="0 0 6.6 6.4"><rect x="0.3" y="0.3" width="6" height="5.8" fill="#fff" stroke="#444" stroke-width="0.55"/></svg>
<span style="left:250px;top:413px;font-size:6.5px;letter-spacing:-0.284px;color:#222;">Sommet</span>
<svg class="b" style="left:278px;top:411.6px;" width="6.6" height="6.4" viewBox="0 0 6.6 6.4"><rect x="0.3" y="0.3" width="6" height="5.8" fill="#e6e7ea" stroke="#c4c7ce" stroke-width="0.55"/></svg>
<span style="left:286px;top:413px;font-size:6.5px;letter-spacing:-0.158px;color:#888;">Projeter</span>
<svg class="b" style="left:311px;top:411.6px;" width="6.6" height="6.4" viewBox="0 0 6.6 6.4"><rect x="0.3" y="0.3" width="6" height="5.8" fill="#e6e7ea" stroke="#c4c7ce" stroke-width="0.55"/></svg>
<span style="left:319px;top:413px;font-size:6.5px;letter-spacing:-0.222px;color:#888;">Désactiver</span>
<svg style="left:0px;top:420px" width="800" height="10"><rect x="0.00" y="0.30" width="800.00" height="9.40" fill="#eceef2"/></svg>
<svg style="left:0px;top:420px" width="800" height="1"><rect x="0.00" y="0.00" width="800.00" height="0.50" fill="#d3d7e0"/></svg>
<svg style="left:22px;top:421px" width="1" height="8"><rect x="0.00" y="0.00" width="0.50" height="8.00" fill="#c2c7d1"/></svg>
<svg style="left:66px;top:421px" width="1" height="8"><rect x="0.50" y="0.00" width="0.50" height="8.00" fill="#c2c7d1"/></svg>
<svg style="left:111px;top:421px" width="1" height="8"><rect x="0.50" y="0.00" width="0.50" height="8.00" fill="#c2c7d1"/></svg>
<svg style="left:156px;top:421px" width="1" height="8"><rect x="0.50" y="0.00" width="0.50" height="8.00" fill="#c2c7d1"/></svg>
<svg style="left:200px;top:421px" width="1" height="8"><rect x="0.50" y="0.00" width="0.50" height="8.00" fill="#c2c7d1"/></svg>
<svg style="left:282px;top:421px" width="1" height="8"><rect x="0.50" y="0.00" width="0.50" height="8.00" fill="#c2c7d1"/></svg>
<svg style="left:360px;top:421px" width="1" height="8"><rect x="0.00" y="0.00" width="0.50" height="8.00" fill="#c2c7d1"/></svg>
<svg style="left:381px;top:421px" width="1" height="8"><rect x="0.50" y="0.00" width="0.50" height="8.00" fill="#c2c7d1"/></svg>
<svg style="left:411px;top:421px" width="1" height="8"><rect x="0.50" y="0.00" width="0.50" height="8.00" fill="#c2c7d1"/></svg>
<svg style="left:454px;top:421px" width="1" height="8"><rect x="0.00" y="0.00" width="0.50" height="8.00" fill="#c2c7d1"/></svg>
<svg style="left:515px;top:421px" width="1" height="8"><rect x="0.50" y="0.00" width="0.50" height="8.00" fill="#c2c7d1"/></svg>
<svg style="left:559px;top:421px" width="1" height="8"><rect x="0.00" y="0.00" width="0.50" height="8.00" fill="#c2c7d1"/></svg>
<svg style="left:628px;top:421px" width="1" height="8"><rect x="0.00" y="0.00" width="0.50" height="8.00" fill="#c2c7d1"/></svg>
<svg style="left:647px;top:421px" width="1" height="8"><rect x="0.50" y="0.00" width="0.50" height="8.00" fill="#c2c7d1"/></svg>
<svg style="left:360px;top:420px" width="22" height="10"><rect x="0.30" y="0.60" width="21.00" height="8.80" fill="#cfd4e6"/></svg>
<svg style="left:411px;top:420px" width="43" height="10"><rect x="0.80" y="0.60" width="42.00" height="8.80" fill="#cfd4e6"/></svg>
<svg style="left:515px;top:420px" width="44" height="10"><rect x="0.80" y="0.60" width="43.00" height="8.80" fill="#cfd4e6"/></svg>
<span style="left:3px;top:424px;font-size:6.31px;letter-spacing:-0.340px;color:#222;">PlanC</span>
<span style="left:30px;top:424px;font-size:6.5px;letter-spacing:-0.222px;color:#222;">x -275.097</span>
<span style="left:75px;top:424px;font-size:6.5px;letter-spacing:-0.222px;color:#222;">y -169.562</span>
<span style="left:130px;top:424px;font-size:6.5px;letter-spacing:-0.224px;color:#222;">z 0</span>
<span style="left:164px;top:424px;font-size:6.5px;letter-spacing:-0.051px;color:#222;">Millimètres</span>
<span style="left:210px;top:424px;font-size:6.48px;letter-spacing:-0.340px;color:#222;">Calque 02</span>
<span style="left:291px;top:424px;font-size:6.5px;letter-spacing:-0.037px;color:#222;">Magnétisme de la grille</span>
<span style="left:362.5px;top:424px;font-size:6.5px;letter-spacing:-0.241px;color:#222;font-weight:bold;">Ortho</span>
<span style="left:386px;top:424px;font-size:6.5px;letter-spacing:-0.125px;color:#222;">Planéité</span>
<span style="left:414px;top:424px;font-size:6.5px;letter-spacing:-0.303px;color:#222;font-weight:bold;">Accrochages</span>
<span style="left:456.5px;top:424px;font-size:6.5px;letter-spacing:-0.066px;color:#222;">Repérage intelligent</span>
<span style="left:518px;top:424px;font-size:6.5px;letter-spacing:-0.121px;color:#222;font-weight:bold;">Manipulateur</span>
<span style="left:561.5px;top:424px;font-size:6.5px;letter-spacing:-0.020px;color:#222;">Enregistrer l&#x27;historique</span>
<span style="left:631px;top:424px;font-size:6.5px;letter-spacing:-0.076px;color:#222;">Filtre</span>
<span style="left:649px;top:424px;font-size:6.5px;letter-spacing:-0.132px;color:#222;">Minutes depuis le dernier enregistrement : 0</span>
<div style="left:203px;top:422.3px;width:5.5px;height:5.5px;background:#1010d8;border:0.4px solid #334;box-sizing:border-box;"></div>
<svg style="left:683px;top:87px" width="117" height="334"><rect x="0.00" y="0.00" width="117.00" height="333.20" fill="#ecedf1"/></svg>
<svg style="left:687px;top:97px" width="1" height="308"><rect x="0.30" y="0.30" width="0.50" height="307.20" fill="#c4cadb"/></svg>
<svg style="left:687px;top:404px" width="114" height="1"><rect x="0.30" y="0.30" width="113.00" height="0.50" fill="#c4cadb"/></svg>
<svg style="left:787px;top:92px" width="13" height="1"><rect x="0.00" y="0.40" width="13.00" height="0.50" fill="#c4cadb"/></svg>
<span style="left:688.5px;top:91px;font-size:6.5px;letter-spacing:-0.153px;color:#222;">Propriétés: Propriétés de l&#x27;affichage</span>
<svg style="left:687px;top:108px" width="113" height="1"><rect x="0.50" y="0.30" width="112.50" height="0.50" fill="#c9cfde"/></svg>
<div style="left:687.5px;top:97.3px;width:15.5px;height:11.5px;background:#f3f4f8;border:0.5px solid #d3d8e5;border-bottom:none;box-sizing:border-box;"></div>
<svg class="b" style="left:690.3px;top:99px;" width="8.7" height="8.7" viewBox="0 0 9.6 9.6"><circle cx="4.8" cy="4.8" r="3.4" fill="none" stroke="url(#cw)" stroke-width="2.4"/><circle cx="4.8" cy="4.8" r="4.6" fill="none" stroke="#222" stroke-width="0.5"/><circle cx="4.8" cy="4.8" r="2.1" fill="#fff"/><defs><linearGradient id="cw" x1="0" y1="0" x2="1" y2="1"><stop offset="0" stop-color="#f22"/><stop offset="0.3" stop-color="#ee2"/><stop offset="0.55" stop-color="#2c2"/><stop offset="0.8" stop-color="#22e"/><stop offset="1" stop-color="#c2c"/></linearGradient></defs></svg>
<svg class="b" style="left:706.7px;top:99.2px;" width="8.6" height="8.6" viewBox="0 0 10 10"><path d="M0.5 1.5L4.5 3L9.5 1.5V5.5L5 9L0.5 5.5Z" fill="#e23a1e" stroke="#5a1a10" stroke-width="0.4"/><path d="M0.5 4L5 6L9.5 4V6.5L5 9.5L0.5 6.5Z" fill="#2a4fb8" stroke="#123" stroke-width="0.3"/><path d="M0.5 4L5 6L9.5 4" fill="none" stroke="#fff" stroke-width="0.8"/></svg>
<svg class="b" style="left:723.6px;top:99px;" width="8.8" height="8.8" viewBox="0 0 10 10"><circle cx="4.6" cy="5.6" r="3.8" fill="#2848c0" stroke="#10205a" stroke-width="0.5"/><circle cx="3.5" cy="4.4" r="1.3" fill="#8fb0ff"/><path d="M6.5 1.2H9V3.4" fill="none" stroke="#222" stroke-width="0.7"/></svg>
<svg class="b" style="left:740.6px;top:99.2px;" width="8.4" height="8.4" viewBox="0 0 10 10"><path d="M1 9L4.5 4.5L6.5 6Z" fill="#ddd" stroke="#444" stroke-width="0.4"/><path d="M4.5 4.5L7 1L9 2.6L6.5 6Z" fill="#e2452a" stroke="#5a1a10" stroke-width="0.4"/></svg>
<svg class="b" style="left:757.4px;top:100px;" width="8.4" height="6.8" viewBox="0 0 10 8"><path d="M0.5 1H3.8L4.8 2H8.5V7H0.5Z" fill="#d9a520" stroke="#7a5a08" stroke-width="0.4"/><path d="M0.5 7L2 3.3H9.7L8.5 7Z" fill="#f6d44a" stroke="#7a5a08" stroke-width="0.4"/></svg>
<svg class="b" style="left:774.8px;top:99.2px;" width="8.4" height="8.4" viewBox="0 0 9 9"><rect x="0.4" y="0.4" width="8.2" height="8.2" fill="#2a4ab0" stroke="#444" stroke-width="0.6"/><rect x="1.6" y="1.8" width="5.8" height="5" fill="#7fa0ee"/><path d="M3 3V6M4 3V6M5.2 3.2Q6.6 4.5 5.2 5.8" stroke="#fff" stroke-width="0.7" fill="none"/></svg>
<svg class="b" style="left:792px;top:100.5px;" width="7" height="7" viewBox="0 0 7 7"><circle cx="3.5" cy="3.5" r="3" fill="#f4f5f8" stroke="#c9cfdf" stroke-width="0.5"/><circle cx="3.5" cy="3.5" r="0.9" fill="#c9cfdf"/></svg>
<svg style="left:690px;top:110px" width="15" height="15"><rect x="0.00" y="0.30" width="14.70" height="14.60" fill="#b4c2f0"/></svg>
<svg class="b" style="left:692px;top:113px;" width="11" height="9" viewBox="0 0 12 10"><path d="M0.5 3H3L4 1.5H8L9 3H11.5V9.5H0.5Z" fill="#2a2a2a" stroke="#000" stroke-width="0.4"/><circle cx="6" cy="6" r="2.4" fill="#555" stroke="#999" stroke-width="0.5"/><circle cx="6" cy="6" r="1" fill="#2a6a3a"/></svg>
<svg class="b" style="left:707px;top:111.5px;" width="13.5" height="12" viewBox="0 0 13.5 12"><rect x="0.5" y="0.5" width="12.5" height="11" fill="#9fb4c4" stroke="#444" stroke-width="0.6"/><rect x="2.3" y="2.3" width="9" height="7.4" fill="#fff" stroke="#c0392b" stroke-width="0.8"/></svg>
<span style="left:691.5px;top:134px;font-size:7.2px;letter-spacing:-0.112px;color:#333;">Fenêtre</span>
<svg style="left:700px;top:142px" width="95" height="2"><rect x="0.00" y="0.80" width="95.00" height="0.45" fill="#dde0e9"/></svg>
<span style="left:701px;top:147px;font-size:6.5px;letter-spacing:0.147px;color:#333;">Titre</span>
<svg style="left:743px;top:142px" width="52" height="12"><rect x="0.00" y="0.95" width="52.00" height="10.30" fill="#fff"/></svg>
<span style="left:745px;top:147px;font-size:6.46px;letter-spacing:-0.340px;color:#222;">Dessus</span>
<svg style="left:700px;top:153px" width="95" height="1"><rect x="0.00" y="0.25" width="95.00" height="0.45" fill="#dde0e9"/></svg>
<span style="left:701px;top:158px;font-size:6.5px;letter-spacing:0.013px;color:#333;">Largeur</span>
<svg style="left:743px;top:153px" width="52" height="12"><rect x="0.00" y="0.85" width="52.00" height="10.30" fill="#fff"/></svg>
<span style="left:745px;top:158px;font-size:6.5px;letter-spacing:-0.186px;color:#222;">773</span>
<svg style="left:700px;top:164px" width="95" height="1"><rect x="0.00" y="0.15" width="95.00" height="0.45" fill="#dde0e9"/></svg>
<span style="left:701px;top:169px;font-size:6.5px;letter-spacing:0.054px;color:#333;">Hauteur</span>
<svg style="left:743px;top:164px" width="52" height="12"><rect x="0.00" y="0.75" width="52.00" height="10.30" fill="#fff"/></svg>
<span style="left:745px;top:169px;font-size:6.5px;letter-spacing:-0.186px;color:#222;">365</span>
<svg style="left:700px;top:175px" width="95" height="1"><rect x="0.00" y="0.05" width="95.00" height="0.45" fill="#dde0e9"/></svg>
<span style="left:701px;top:180px;font-size:6.5px;letter-spacing:-0.041px;color:#333;">Projection</span>
<svg style="left:743px;top:175px" width="41" height="11"><rect x="0.00" y="0.65" width="40.50" height="10.30" fill="#fff"/></svg>
<span style="left:745px;top:180px;font-size:6.5px;letter-spacing:-0.255px;color:#222;">Parallèle</span>
<div style="left:784.3px;top:175.95000000000002px;width:10.7px;height:9.6px;background:#e4e5e9;border:0.5px solid #b9bbc2;box-sizing:border-box;"></div>
<svg class="b" style="left:787.3px;top:179.5px;" width="5" height="4" viewBox="0 0 5 4"><path d="M0.8 0.8L2.5 2.7L4.2 0.8" fill="none" stroke="#555" stroke-width="0.6"/></svg>
<svg style="left:700px;top:185px" width="95" height="2"><rect x="0.00" y="0.95" width="95.00" height="0.45" fill="#dde0e9"/></svg>
<span style="left:701px;top:191px;font-size:6.5px;letter-spacing:0.039px;color:#333;">Verrouillé</span>
<svg class="b" style="left:743.7px;top:188.7px;" width="6.5" height="6.5" viewBox="0 0 6.5 6.5"><rect x="0.35" y="0.35" width="5.8" height="5.8" fill="#fff" stroke="#444" stroke-width="0.6"/></svg>
<svg style="left:700px;top:196px" width="95" height="2"><rect x="0.00" y="0.85" width="95.00" height="0.45" fill="#dde0e9"/></svg>
<span style="left:691.5px;top:201px;font-size:7.2px;letter-spacing:0.070px;color:#333;">Caméra</span>
<svg style="left:700px;top:210px" width="95" height="1"><rect x="0.00" y="0.20" width="95.00" height="0.45" fill="#dde0e9"/></svg>
<span style="left:701px;top:214px;font-size:6.5px;letter-spacing:-0.179px;color:#777;">Distance foc...</span>
<svg style="left:743px;top:210px" width="52" height="11"><rect x="0.00" y="0.15" width="52.00" height="10.30" fill="#fff"/></svg>
<span style="left:745px;top:214px;font-size:6.5px;letter-spacing:-0.289px;color:#222;">50.0</span>
<svg style="left:700px;top:220px" width="95" height="1"><rect x="0.00" y="0.45" width="95.00" height="0.45" fill="#dde0e9"/></svg>
<span style="left:701px;top:225px;font-size:6.5px;letter-spacing:0.035px;color:#333;">Rotation</span>
<svg style="left:743px;top:221px" width="52" height="11"><rect x="0.00" y="0.05" width="52.00" height="10.30" fill="#fff"/></svg>
<span style="left:745px;top:225px;font-size:6.12px;letter-spacing:-0.340px;color:#222;">0.0</span>
<svg style="left:700px;top:231px" width="95" height="1"><rect x="0.00" y="0.35" width="95.00" height="0.45" fill="#dde0e9"/></svg>
<span style="left:701px;top:236px;font-size:6.5px;letter-spacing:0.022px;color:#333;">Position X</span>
<svg style="left:743px;top:231px" width="52" height="12"><rect x="0.00" y="0.85" width="52.00" height="10.30" fill="#fff"/></svg>
<span style="left:745px;top:236px;font-size:6.5px;letter-spacing:-0.315px;color:#222;">51.206</span>
<svg style="left:700px;top:242px" width="95" height="1"><rect x="0.00" y="0.15" width="95.00" height="0.45" fill="#dde0e9"/></svg>
<span style="left:701px;top:247px;font-size:6.5px;letter-spacing:0.034px;color:#333;">Position Y</span>
<svg style="left:743px;top:242px" width="52" height="12"><rect x="0.00" y="0.75" width="52.00" height="10.30" fill="#fff"/></svg>
<span style="left:745px;top:247px;font-size:6.47px;letter-spacing:-0.340px;color:#222;">102.758</span>
<svg style="left:700px;top:253px" width="95" height="1"><rect x="0.00" y="0.05" width="95.00" height="0.45" fill="#dde0e9"/></svg>
<span style="left:701px;top:258px;font-size:6.5px;letter-spacing:0.059px;color:#333;">Position Z</span>
<svg style="left:743px;top:253px" width="52" height="11"><rect x="0.00" y="0.65" width="52.00" height="10.30" fill="#fff"/></svg>
<span style="left:745px;top:258px;font-size:6.5px;letter-spacing:-0.315px;color:#222;">67.125</span>
<svg style="left:700px;top:263px" width="95" height="2"><rect x="0.00" y="0.95" width="95.00" height="0.45" fill="#dde0e9"/></svg>
<span style="left:701px;top:269px;font-size:6.5px;letter-spacing:-0.300px;color:#333;">Distance vers...</span>
<span style="left:745px;top:269px;font-size:6.5px;letter-spacing:-0.315px;color:#333;">65.125</span>
<svg style="left:700px;top:274px" width="95" height="2"><rect x="0.00" y="0.85" width="95.00" height="0.45" fill="#dde0e9"/></svg>
<span style="left:701px;top:280px;font-size:6.5px;letter-spacing:-0.016px;color:#333;">Position</span>
<div style="left:743px;top:275.84999999999997px;width:52px;height:9.5px;background:#e3e4e8;border:0.5px solid #b9bbc2;box-sizing:border-box;"></div>
<span style="left:753px;top:279px;font-size:6.5px;letter-spacing:-0.256px;color:#222;">Positionner...</span>
<svg style="left:700px;top:285px" width="95" height="2"><rect x="0.00" y="0.75" width="95.00" height="0.45" fill="#dde0e9"/></svg>
<span style="left:691.5px;top:290px;font-size:7.2px;letter-spacing:-0.078px;color:#333;">Cible</span>
<svg style="left:700px;top:299px" width="95" height="1"><rect x="0.00" y="0.00" width="95.00" height="0.45" fill="#dde0e9"/></svg>
<span style="left:701px;top:303px;font-size:6.5px;letter-spacing:-0.067px;color:#333;">Cible X</span>
<svg style="left:743px;top:299px" width="52" height="11"><rect x="0.00" y="0.15" width="52.00" height="10.30" fill="#fff"/></svg>
<span style="left:745px;top:303px;font-size:6.5px;letter-spacing:-0.315px;color:#222;">51.206</span>
<svg style="left:700px;top:309px" width="95" height="1"><rect x="0.00" y="0.45" width="95.00" height="0.45" fill="#dde0e9"/></svg>
<span style="left:701px;top:314px;font-size:6.5px;letter-spacing:-0.049px;color:#333;">Cible Y</span>
<svg style="left:743px;top:310px" width="52" height="11"><rect x="0.00" y="0.05" width="52.00" height="10.30" fill="#fff"/></svg>
<span style="left:745px;top:314px;font-size:6.47px;letter-spacing:-0.340px;color:#222;">102.758</span>
<svg style="left:700px;top:320px" width="95" height="1"><rect x="0.00" y="0.35" width="95.00" height="0.45" fill="#dde0e9"/></svg>
<span style="left:701px;top:325px;font-size:6.5px;letter-spacing:-0.013px;color:#333;">Cible Z</span>
<svg style="left:743px;top:320px" width="52" height="12"><rect x="0.00" y="0.95" width="52.00" height="10.30" fill="#fff"/></svg>
<span style="left:745px;top:325px;font-size:6.12px;letter-spacing:-0.340px;color:#222;">2.0</span>
<svg style="left:700px;top:331px" width="95" height="1"><rect x="0.00" y="0.25" width="95.00" height="0.45" fill="#dde0e9"/></svg>
<span style="left:701px;top:336px;font-size:6.5px;letter-spacing:-0.016px;color:#333;">Position</span>
<div style="left:743px;top:332.25px;width:52px;height:9.5px;background:#e3e4e8;border:0.5px solid #b9bbc2;box-sizing:border-box;"></div>
<span style="left:753px;top:335px;font-size:6.5px;letter-spacing:-0.256px;color:#222;">Positionner...</span>
<svg style="left:700px;top:342px" width="95" height="1"><rect x="0.00" y="0.15" width="95.00" height="0.45" fill="#dde0e9"/></svg>
<span style="left:691.5px;top:347px;font-size:7.2px;letter-spacing:0.061px;color:#333;">Papier-peint</span>
<svg style="left:700px;top:355px" width="95" height="2"><rect x="0.00" y="0.80" width="95.00" height="0.45" fill="#dde0e9"/></svg>
<span style="left:701px;top:360px;font-size:6.5px;letter-spacing:-0.123px;color:#333;">NomFichier</span>
<svg style="left:743px;top:356px" width="41" height="11"><rect x="0.00" y="0.15" width="40.50" height="10.30" fill="#fff"/></svg>
<span style="left:745px;top:360px;font-size:6.5px;letter-spacing:-0.292px;color:#222;">(aucun)</span>
<div style="left:784.8px;top:356.45000000000005px;width:10.2px;height:9.6px;background:#e3e4e8;border:0.5px solid #b9bbc2;box-sizing:border-box;"></div>
<span style="left:787.5px;top:361px;font-size:6.5px;letter-spacing:-0.141px;color:#222;">...</span>
<svg style="left:700px;top:366px" width="95" height="1"><rect x="0.00" y="0.45" width="95.00" height="0.45" fill="#dde0e9"/></svg>
<span style="left:701px;top:371px;font-size:6.5px;letter-spacing:0.010px;color:#333;">Afficher</span>
<svg class="b" style="left:743.7px;top:369.2px;" width="6.5" height="6.5" viewBox="0 0 6.5 6.5"><rect x="0.35" y="0.35" width="5.8" height="5.8" fill="#fff" stroke="#444" stroke-width="0.6"/><path d="M1.4 3.2L2.7 4.6L5 1.7" fill="none" stroke="#333" stroke-width="0.7"/></svg>
<svg style="left:700px;top:377px" width="95" height="1"><rect x="0.00" y="0.35" width="95.00" height="0.45" fill="#dde0e9"/></svg>
<span style="left:701px;top:382px;font-size:6.5px;letter-spacing:-0.105px;color:#333;">Gris</span>
<svg class="b" style="left:743.7px;top:380.09999999999997px;" width="6.5" height="6.5" viewBox="0 0 6.5 6.5"><rect x="0.35" y="0.35" width="5.8" height="5.8" fill="#fff" stroke="#444" stroke-width="0.6"/><path d="M1.4 3.2L2.7 4.6L5 1.7" fill="none" stroke="#333" stroke-width="0.7"/></svg>
<svg style="left:700px;top:388px" width="95" height="1"><rect x="0.00" y="0.25" width="95.00" height="0.45" fill="#dde0e9"/></svg>
<div style="left:0px;top:429.6px;width:800px;height:20.4px;background:#e8e7a4;background:linear-gradient(90deg,#e2e6a8 0%,#e4e7b0 25%,#ebebae 40%,#efedb0 52%,#eeebaa 58%,#e6e8a0 65%,#dfe4aa 74%,#e2e6a6 86%,#e3e6a4 100%);"></div>
<svg class="b" style="left:8.5px;top:434.5px;" width="9" height="9" viewBox="0 0 9 9"><path d="M0 1.3L3.7 0.8V4.2H0Z M4.3 0.7L9 0V4.2H4.3Z M0 4.8H3.7V8.2L0 7.7Z M4.3 4.8H9V9L4.3 8.3Z" fill="#111"/></svg>
<svg style="left:25px;top:430px" width="180" height="20"><rect x="0.00" y="0.20" width="179.50" height="19.30" fill="#fff"/></svg>
<svg class="b" style="left:30.5px;top:435.5px;" width="9" height="9" viewBox="0 0 9 9"><circle cx="5.4" cy="3.6" r="2.7" fill="none" stroke="#333" stroke-width="0.7"/><path d="M3.5 5.6L0.6 8.5" stroke="#333" stroke-width="0.8"/></svg>
<span style="left:46px;top:437px;font-size:7.4px;letter-spacing:0.230px;color:#3a3a3a;">Taper ici pour rechercher</span>
<svg class="b" style="left:211.4px;top:434.2px;" width="11" height="9" viewBox="0 0 11 9"><rect x="2.3" y="1.6" width="5.6" height="5.2" fill="none" stroke="#222" stroke-width="0.75"/><path d="M0.5 2.4V6M9.7 1.6V3.4M9.7 5V6.8" stroke="#222" stroke-width="0.8"/><path d="M0.5 2.4H2.3M0.5 6H2.3" stroke="#222" stroke-width="0.6"/></svg>
<svg class="b" style="left:237.4px;top:432.9px;" width="12" height="12" viewBox="0 0 11 11"><defs><linearGradient id="eg" x1="0" y1="0" x2="0.9" y2="1"><stop offset="0" stop-color="#2aa8d8"/><stop offset="0.55" stop-color="#1273c8"/><stop offset="1" stop-color="#0c4fa0"/></linearGradient><linearGradient id="eg2" x1="0" y1="0" x2="1" y2="0.4"><stop offset="0" stop-color="#2fc4dc"/><stop offset="1" stop-color="#58d860"/></linearGradient></defs><circle cx="5.5" cy="5.5" r="5.3" fill="url(#eg)"/><path d="M0.4 5C0.8 2.2 3 0.2 5.8 0.2C8.6 0.2 10.6 2.2 10.8 4.6C10.9 6 10 7.2 8.4 7.2C7.2 7.2 6.8 6.6 7.2 5.8C7.6 4.8 6.6 3.4 4.8 3.5C2.8 3.6 1 5.2 0.9 7.4C0.5 6.6 0.3 5.8 0.4 5Z" fill="url(#eg2)"/><path d="M4.6 6.2C4.6 8.4 7.2 9.4 9.4 8.2C8 10.4 4.6 10.6 3 8.8C2 7.6 2.2 5.8 3.4 4.8C4 4.4 4.8 4.4 5.2 4.6C4.8 5 4.6 5.6 4.6 6.2Z" fill="#0b3f8a" opacity="0.55"/></svg>
<svg class="b" style="left:262.9px;top:433.6px;" width="12.3" height="10.6" viewBox="0 0 12 10"><path d="M0.3 0.8H4L5 2H11.7V9.5H0.3Z" fill="#e9a820"/><path d="M0.3 3.2H11.7V9.5H0.3Z" fill="#fbd65a"/><rect x="3.2" y="6" width="5.6" height="3.5" fill="#4aa3e8"/></svg>
<svg style="left:258px;top:448px" width="23" height="2"><rect x="0.90" y="0.60" width="21.30" height="1.40" fill="#1b74d4"/></svg>
<svg class="b" style="left:289.2px;top:433px;" width="11.6" height="11.6" viewBox="0 0 11 11"><path d="M3.2 2.6V1.2H7.8V2.6" fill="none" stroke="#1f3f7a" stroke-width="0.8"/><rect x="0.5" y="2.5" width="10" height="8" rx="0.8" fill="#1f4e9c"/><rect x="3" y="4.3" width="2.2" height="2.2" fill="#f25022"/><rect x="5.7" y="4.3" width="2.2" height="2.2" fill="#7fba00"/><rect x="3" y="7" width="2.2" height="2.2" fill="#00a4ef"/><rect x="5.7" y="7" width="2.2" height="2.2" fill="#ffb900"/></svg>
<svg class="b" style="left:314.9px;top:433.2px;" width="11.6" height="11.6" viewBox="0 0 11 11"><path d="M0.6 0.6L5.5 2.8L10.4 0.6V7.6L5.5 10.6L0.6 7.6Z" fill="#c01818"/><path d="M3 3.6L5.5 4.8L8 3.6V6.6L5.5 8L3 6.6Z" fill="#f0e8a6"/></svg>
<svg class="b" style="left:340.4px;top:433.7px;" width="12.6" height="11" viewBox="0 0 12 10"><path d="M0.5 3.2L6 0.3L11.5 3.2V9.5H0.5Z" fill="#1a6fc4"/><path d="M1.8 2.2H10.2V6H1.8Z" fill="#fff"/><path d="M0.5 3.4L6 7L11.5 3.4V9.5H0.5Z" fill="#2f95e8"/></svg>
<svg class="b" style="left:366.5px;top:433.3px;" width="11.8" height="11.8" viewBox="0 0 10 10"><rect x="0" y="0" width="10" height="10" fill="#1d9ad6"/><path d="M3.3 2V8H7.2" fill="none" stroke="#fff" stroke-width="1.5"/></svg>
<svg class="b" style="left:392px;top:433px;" width="12.5" height="12.8" viewBox="0 0 10 10"><rect x="0" y="0" width="10" height="10" rx="0.9" fill="#107c10"/><circle cx="5" cy="5.1" r="3.7" fill="#fff"/><path d="M2.5 2.5C3.6 3 4.5 3.9 5 4.7C5.5 3.9 6.4 3 7.5 2.5C8.3 3.4 8.7 4.3 8.7 5.1C8.7 6.2 8.3 7.1 7.7 7.8C7.3 6.6 6.2 5.5 5 4.9C3.8 5.5 2.7 6.6 2.3 7.8C1.7 7.1 1.3 6.2 1.3 5.1C1.3 4.3 1.7 3.4 2.5 2.5Z" fill="#fff"/><path d="M3.1 2.2C3.7 1.8 4.4 1.9 5 2.4C5.6 1.9 6.3 1.8 6.9 2.2C6.2 2.6 5.5 3.2 5 3.9C4.5 3.2 3.8 2.6 3.1 2.2Z M2.4 7.9C2.9 6.7 3.9 5.6 5 5C6.1 5.6 7.1 6.7 7.6 7.9C6.2 9.2 3.8 9.2 2.4 7.9Z" fill="#fff"/><path d="M2.3 2.7C3.4 3.3 4.4 4.2 5 5C5.6 4.2 6.6 3.3 7.7 2.7" fill="none" stroke="#107c10" stroke-width="0.9"/><path d="M2.2 7.9C2.6 6.9 3.6 5.8 5 5C6.4 5.8 7.4 6.9 7.8 7.9" fill="none" stroke="#107c10" stroke-width="0.9"/></svg>
<svg style="left:412px;top:429px" width="24" height="21"><rect x="0.00" y="0.60" width="23.60" height="20.40" fill="#f3f3d9"/></svg>
<svg class="b" style="left:418px;top:433px;" width="12.5" height="12.5" viewBox="0 0 12 12"><rect x="0" y="0" width="12" height="12" fill="#0c0c0c"/><path d="M1.2 0.6L3.4 0.4L4.2 2L7 0.8L9.6 0.4L10.4 3.4L11.6 4.4L10 7.2L10.6 9.6L8.6 9L6.6 11.4L5.4 9.2L3.2 9L0.6 6.2L2 4.2Z" fill="#fff"/><path d="M3.4 0.4L4.2 2L2.4 4.4L1.2 0.6Z" fill="#cfcfcf"/><path d="M7.2 1.2L9.4 3.6L8.2 6L6 3.2Z" fill="#1a1a1a"/><path d="M2.6 5.4L5.6 8.6M4.2 4L7.8 8" stroke="#555" stroke-width="0.5"/></svg>
<svg style="left:412px;top:448px" width="24" height="2"><rect x="0.00" y="0.60" width="23.60" height="1.40" fill="#1b74d4"/></svg>
<svg class="b" style="left:444px;top:433.2px;" width="12.2" height="12.4" viewBox="0 0 11.5 11.5"><defs><radialGradient id="ff" cx="0.55" cy="0.2" r="0.95"><stop offset="0" stop-color="#fff36b"/><stop offset="0.35" stop-color="#ffb02e"/><stop offset="0.7" stop-color="#ff5a2a"/><stop offset="1" stop-color="#e8197a"/></radialGradient><radialGradient id="ffg" cx="0.5" cy="0.4" r="0.6"><stop offset="0" stop-color="#9059ff"/><stop offset="1" stop-color="#5b2fd6"/></radialGradient></defs><path d="M5.9 1.6C6.6 0.4 7.8 0.1 7.8 0.1C7.6 1.2 8.6 1.8 9.6 3C10.8 4.4 11.3 5.8 11 7.4C10.5 10 8.2 11.4 5.8 11.4C3 11.4 0.6 9.4 0.5 6.4C0.5 5 1 3.6 1.8 2.8C1.8 3.4 2 3.8 2.2 4C2.8 2.6 4.4 1.8 5.9 1.6Z" fill="url(#ff)"/><circle cx="6.1" cy="6.3" r="2.9" fill="url(#ffg)"/><path d="M2.2 4.6C3.2 4 4.4 4.2 5.2 5C6.2 4.8 7 5.2 7.4 6C6.2 5.9 5.2 6.6 5.4 7.8C5.6 8.8 6.6 9.4 7.8 9C6.6 10.2 4.4 10.2 3.2 8.8C2.2 7.8 1.8 6 2.2 4.6Z" fill="#ff8a1e"/></svg>
<svg style="left:440px;top:448px" width="22" height="2"><rect x="0.00" y="0.60" width="22.00" height="1.40" fill="#1b74d4"/></svg>
<svg class="b" style="left:586.3px;top:433.3px;" width="12" height="12" viewBox="0 0 12 12"><defs><radialGradient id="sun" cx="0.4" cy="0.35" r="0.7"><stop offset="0" stop-color="#ffd24a"/><stop offset="1" stop-color="#f59a1a"/></radialGradient></defs><circle cx="6" cy="6" r="5.2" fill="url(#sun)"/></svg>
<span style="left:603px;top:437px;font-size:7.2px;letter-spacing:0.245px;color:#222;">8°C  Ensoleillé</span>
<svg class="b" style="left:659px;top:437px;" width="7" height="5" viewBox="0 0 7 5"><path d="M0.7 4L3.5 1.2L6.3 4" fill="none" stroke="#222" stroke-width="0.7"/></svg>
<svg class="b" style="left:669.5px;top:435.5px;" width="8" height="9" viewBox="0 0 8 9"><rect x="1.5" y="1" width="4" height="5.5" rx="1" fill="none" stroke="#222" stroke-width="0.7"/><path d="M3.5 6.5V8.5M1.5 8.5H5.5M6.5 2.5V5" stroke="#222" stroke-width="0.7" fill="none"/></svg>
<svg class="b" style="left:682px;top:437.5px;" width="10" height="6" viewBox="0 0 10 6"><rect x="0.5" y="0.6" width="8" height="4.4" fill="#222"/><rect x="8.6" y="2" width="1" height="1.8" fill="#222"/></svg>
<svg class="b" style="left:694.5px;top:436px;" width="9" height="8" viewBox="0 0 9 8"><path d="M0.8 7.2L1.4 7.2 M1 5.4Q2.6 5.4 2.8 7.2 M1 3.4Q4.4 3.6 4.8 7.2 M1 1.4Q6.6 1.6 6.8 7.2" fill="none" stroke="#222" stroke-width="0.7"/><path d="M6 1L8 3" stroke="#222" stroke-width="0.5"/></svg>
<svg class="b" style="left:705.5px;top:436px;" width="9" height="8" viewBox="0 0 9 8"><path d="M0.5 3H2L4 1V7L2 5H0.5Z" fill="none" stroke="#222" stroke-width="0.6"/><path d="M5.2 2.6Q6.2 4 5.2 5.4 M6.4 1.6Q8 4 6.4 6.4" fill="none" stroke="#222" stroke-width="0.6"/></svg>
<span style="left:721.5px;top:439px;font-size:6.5px;letter-spacing:0.000px;color:#222;">FRA</span>
<span style="left:748.5px;top:434px;font-size:6px;letter-spacing:-0.103px;color:#222;">15:32</span>
<span style="left:741.5px;top:443px;font-size:6px;letter-spacing:-0.159px;color:#222;">11.02.2022</span>
<svg class="b" style="left:777.5px;top:435.5px;" width="9" height="9" viewBox="0 0 9 9"><path d="M0.5 0.5H8.5V6.5H4.5L3 8.3V6.5H0.5Z" fill="none" stroke="#222" stroke-width="0.7"/></svg>
<svg class="b" style="left:4.7px;top:68.9px;" width="9.6" height="9.6" viewBox="0 0 10 10"><path d="M1.6 0.6H6L8.4 3V9.4H1.6Z" fill="#fff" stroke="#333" stroke-width="0.7"/><path d="M6 0.6V3H8.4" fill="#ddd" stroke="#333" stroke-width="0.5"/></svg>
<svg class="b" style="left:16.7px;top:68.9px;" width="9.6" height="9.6" viewBox="0 0 10 10"><path d="M0.5 2H3.5L4.4 3H8V4.2H0.5Z" fill="#c8960c" stroke="#6b4e05" stroke-width="0.5"/><path d="M0.5 8.4V3.8H2L3 4.4H9.6L8 8.4Z" fill="#f5c518" stroke="#6b4e05" stroke-width="0.5"/></svg>
<svg class="b" style="left:28.2px;top:68.9px;" width="9.6" height="9.6" viewBox="0 0 10 10"><rect x="0.7" y="0.7" width="8.6" height="8.6" fill="#b59b14" stroke="#4d4208" stroke-width="0.6"/><rect x="2.2" y="0.9" width="5.4" height="3.2" fill="#efe6b0"/><rect x="2.6" y="5.6" width="4.8" height="3.6" fill="#5a5a5a"/><rect x="3.2" y="6.2" width="1.4" height="2.6" fill="#ddd"/><path d="M9.2 8.2V9.6H7.8Z" fill="#333"/></svg>
<svg class="b" style="left:39.5px;top:68.9px;" width="9.6" height="9.6" viewBox="0 0 10 10"><path d="M2.6 3.2L3.6 0.8H8.6L7.6 3.2Z" fill="#fff" stroke="#222" stroke-width="0.5"/><path d="M0.6 3.4H9.4V7.2H0.6Z" fill="#3a3a3a" stroke="#111" stroke-width="0.5"/><path d="M1.6 5.4H8.4V9H1.6Z" fill="#eee" stroke="#222" stroke-width="0.5"/><path d="M1.2 4.4H8.8" stroke="#ddd" stroke-width="0.6"/></svg>
<svg class="b" style="left:52.2px;top:68.9px;" width="9.6" height="9.6" viewBox="0 0 10 10"><path d="M1.4 1.6H6L7.6 3.2V9.4H1.4Z" fill="#fff" stroke="#333" stroke-width="0.7"/><path d="M3 4.6H6M3 6.2H6" stroke="#aaa" stroke-width="0.5"/><circle cx="8.3" cy="1.5" r="1.1" fill="#333"/><path d="M9.2 8.2V9.6H7.8Z" fill="#333"/></svg>
<svg class="b" style="left:63.4px;top:68.9px;" width="9.6" height="9.6" viewBox="0 0 10 10"><path d="M2 1.4L8 8.8M8 1.4L2 8.8" stroke="#70757d" stroke-width="0.9"/></svg>
<svg class="b" style="left:74.9px;top:68.9px;" width="9.6" height="9.6" viewBox="0 0 10 10"><path d="M1 0.7H4.4L5.8 2.1V6.6H1Z" fill="#fff" stroke="#333" stroke-width="0.65"/><path d="M4 3.2H7.4L8.8 4.6V9.4H4Z" fill="#fff" stroke="#333" stroke-width="0.65"/></svg>
<svg class="b" style="left:86.5px;top:68.9px;" width="9.6" height="9.6" viewBox="0 0 10 10"><rect x="1.7" y="1.4" width="6.6" height="8" rx="0.7" fill="#f2dc4e" stroke="#5c4d08" stroke-width="0.65"/><rect x="3.4" y="0.5" width="3.2" height="2" rx="0.5" fill="#999" stroke="#333" stroke-width="0.5"/></svg>
<svg class="b" style="left:98.7px;top:68.9px;" width="9.6" height="9.6" viewBox="0 0 10 10"><path d="M1.2 6.8C2.6 3.6 6.4 3.2 8.8 6" fill="none" stroke="#222" stroke-width="1.5"/><path d="M0.3 4.2L3.6 6.4L0.6 8.2Z" fill="#222"/><path d="M9.9 8.6V10H8.5Z" fill="#333"/></svg>
<svg class="b" style="left:109.5px;top:68.9px;" width="9.6" height="9.6" viewBox="0 0 10 10"><path d="M3 9.4C1.6 7.6 1 6.4 1.4 5.6C2 5 2.8 5.8 3.2 6.4V2.2C3.3 1.5 4.3 1.5 4.4 2.2V1.4C4.5 0.7 5.5 0.7 5.6 1.4V1.9C5.7 1.2 6.7 1.2 6.8 1.9V2.9C6.9 2.3 7.9 2.3 8 3V6.8C8 8 7.6 8.8 7.2 9.4Z" fill="#e9ebef" stroke="#5a5f67" stroke-width="0.6"/></svg>
<svg class="b" style="left:121.6px;top:68.9px;" width="9.6" height="9.6" viewBox="0 0 10 10"><path d="M5 0.4L6.3 2.2H3.7Z M5 9.6L3.7 7.8H6.3Z M0.4 5L2.2 3.7V6.3Z M9.6 5L7.8 6.3V3.7Z" fill="#555"/><path d="M5 2V8M2 5H8" stroke="#555" stroke-width="0.6"/><circle cx="5.3" cy="5.2" r="1.6" fill="#e6e8ec" stroke="#555" stroke-width="0.5"/></svg>
<svg class="b" style="left:133.2px;top:68.9px;" width="9.6" height="9.6" viewBox="0 0 10 10"><circle cx="5.6" cy="3.9" r="2.7" fill="#e8ecf2" stroke="#333" stroke-width="0.75"/><path d="M3.6 5.9L0.9 8.9" stroke="#333" stroke-width="1.1"/><path d="M4.6 3.9H6.6" stroke="#333" stroke-width="0.5"/></svg>
<svg class="b" style="left:144.5px;top:68.9px;" width="9.6" height="9.6" viewBox="0 0 10 10"><rect x="3.4" y="0.7" width="6" height="5.4" fill="none" stroke="#444" stroke-width="0.6" stroke-dasharray="1 0.7"/><circle cx="4.6" cy="4.6" r="2.5" fill="#e8ecf2" stroke="#333" stroke-width="0.75"/><path d="M2.8 6.5L0.6 9.2" stroke="#333" stroke-width="1.1"/></svg>
<svg class="b" style="left:156.5px;top:68.9px;" width="9.6" height="9.6" viewBox="0 0 10 10"><path d="M0.4 0.4H2.8L0.4 2.8Z M9.6 0.4V2.8L7.2 0.4Z M0.4 9.6V7.2L2.8 9.6Z M9.6 9.6H7.2L9.6 7.2Z" fill="#222"/><circle cx="5.2" cy="4.8" r="2.7" fill="#e8ecf2" stroke="#333" stroke-width="0.75"/><path d="M3.2 6.8L1.6 8.6" stroke="#333" stroke-width="1"/></svg>
<svg class="b" style="left:168.2px;top:68.9px;" width="9.6" height="9.6" viewBox="0 0 10 10"><circle cx="5.8" cy="3.8" r="2.9" fill="#f4d640" stroke="#333" stroke-width="0.75"/><circle cx="6.2" cy="3.4" r="1.1" fill="#fff6b0"/><path d="M3.7 6L0.9 9" stroke="#333" stroke-width="1.1"/></svg>
<svg class="b" style="left:180.2px;top:68.9px;" width="9.6" height="9.6" viewBox="0 0 10 10"><path d="M1.4 3.6C3 0.8 7.4 1 8.8 3.6" fill="none" stroke="#222" stroke-width="1.1"/><path d="M0.3 1.2L0.9 4.6L3.8 3Z" fill="#222"/><circle cx="5.6" cy="5.8" r="2.1" fill="#e8ecf2" stroke="#333" stroke-width="0.7"/><path d="M4 7.3L2.4 9.2" stroke="#333" stroke-width="0.9"/><path d="M9.2 8.2V9.6H7.8Z" fill="#333"/></svg>
<svg class="b" style="left:190.7px;top:68.4px;" width="10.6" height="10.6" viewBox="0 0 10 10"><rect x="0.4" y="0.8" width="9.2" height="8.2" fill="#a9adb3" stroke="#222" stroke-width="0.8"/><path d="M5 0.8V9M0.4 4.9H9.6" stroke="#222" stroke-width="0.7"/><rect x="4.2" y="0.4" width="1.6" height="0.9" fill="#3a62d8"/><path d="M9.2 8.2V9.6H7.8Z" fill="#333"/></svg>
<svg class="b" style="left:203.5px;top:68.9px;" width="9.6" height="9.6" viewBox="0 0 10 10"><path d="M0.5 6.9V5.3L3 4.9L4.4 3.2H7.4L8.4 4.9L9.6 5.3V6.9Z" fill="#d92b1e" stroke="#6a0f0a" stroke-width="0.4"/><path d="M4.7 3.7H5.9V4.8H3.9Z M6.4 3.7H7.2L7.8 4.8H6.4Z" fill="#fff"/><circle cx="2.7" cy="7" r="1" fill="#222"/><circle cx="7.5" cy="7" r="1" fill="#222"/><path d="M9.2 8.2V9.6H7.8Z" fill="#333"/></svg>
<svg class="b" style="left:215.5px;top:68.9px;" width="9.6" height="9.6" viewBox="0 0 10 10"><path d="M0.6 5.6C2.6 2.6 7 2.6 9 5.6C7 8 2.6 8 0.6 5.6Z" fill="#eef0f3" stroke="#7a7f87" stroke-width="0.6"/><circle cx="4.8" cy="5.4" r="1.4" fill="#8a8f97"/><path d="M6 4.5L8.6 7.6" stroke="#c0392b" stroke-width="0.7"/><path d="M2.4 3.2L4.4 6" stroke="#3a8a3a" stroke-width="0.6"/><path d="M9.2 8.2V9.6H7.8Z" fill="#333"/></svg>
<svg class="b" style="left:226.7px;top:68.9px;" width="9.6" height="9.6" viewBox="0 0 10 10"><circle cx="4.8" cy="4.9" r="3.7" fill="#eef0f3" stroke="#8a8f97" stroke-width="0.7"/><path d="M4.8 4.9H7.4" stroke="#8a8f97" stroke-width="0.6"/><path d="M9.2 8.2V9.6H7.8Z" fill="#333"/></svg>
<svg class="b" style="left:238.5px;top:68.9px;" width="9.6" height="9.6" viewBox="0 0 10 10"><circle cx="3" cy="3.4" r="1.6" fill="#f0c020" stroke="#8a6a08" stroke-width="0.4"/><circle cx="6.8" cy="3" r="1.6" fill="#f0c020" stroke="#8a6a08" stroke-width="0.4"/><circle cx="5" cy="6.6" r="1.5" fill="#e09a18" stroke="#8a6a08" stroke-width="0.4"/><path d="M0.4 0.4H2M0.4 0.4V2M9.6 0.4H8M9.6 0.4V2" stroke="#333" stroke-width="0.5" fill="none"/><path d="M9.2 8.2V9.6H7.8Z" fill="#333"/></svg>
<svg class="b" style="left:249.5px;top:68.9px;" width="9.6" height="9.6" viewBox="0 0 10 10"><path d="M5 0.7C7.2 0.7 8.4 2.6 7.6 4.4C7.2 5.4 6.6 5.8 6.5 6.8H3.5C3.4 5.8 2.8 5.4 2.4 4.4C1.6 2.6 2.8 0.7 5 0.7Z" fill="#bfc3c9" stroke="#555a62" stroke-width="0.6"/><rect x="3.7" y="7" width="2.6" height="2.2" fill="#666b73"/><path d="M9.2 8.2V9.6H7.8Z" fill="#333"/></svg>
<svg class="b" style="left:261.0px;top:68.9px;" width="9.6" height="9.6" viewBox="0 0 10 10"><path d="M3.2 4.6V2.8C3.2 0.6 6.8 0.6 6.8 2.8V4.6" fill="none" stroke="#555a62" stroke-width="0.9"/><rect x="2" y="4.4" width="6" height="4.4" fill="#a0a4ab" stroke="#4a4f57" stroke-width="0.6"/><path d="M9.2 8.2V9.6H7.8Z" fill="#333"/></svg>
<svg class="b" style="left:273.2px;top:68.9px;" width="9.6" height="9.6" viewBox="0 0 10 10"><path d="M0.5 1.5L4.5 3L9.5 1.5V5.5L5 9L0.5 5.5Z" fill="#e23a1e" stroke="#5a1a10" stroke-width="0.4"/><path d="M0.5 4L5 6L9.5 4V6.5L5 9.5L0.5 6.5Z" fill="#2a4fb8" stroke="#123" stroke-width="0.3"/><path d="M0.5 4L5 6L9.5 4" fill="none" stroke="#fff" stroke-width="0.8"/></svg>
<svg class="b" style="left:284.7px;top:68.9px;" width="9.6" height="9.6" viewBox="0 0 10 10"><circle cx="5" cy="5" r="3.3" fill="none" stroke="url(#cw2)" stroke-width="2.4"/><circle cx="5" cy="5" r="4.5" fill="none" stroke="#222" stroke-width="0.5"/><circle cx="5" cy="5" r="2" fill="#fff"/><defs><linearGradient id="cw2" x1="0" y1="0" x2="1" y2="1"><stop offset="0" stop-color="#f22"/><stop offset="0.3" stop-color="#ee2"/><stop offset="0.55" stop-color="#2c2"/><stop offset="0.8" stop-color="#22e"/><stop offset="1" stop-color="#c2c"/></linearGradient></defs></svg>
<svg class="b" style="left:296.2px;top:68.9px;" width="9.6" height="9.6" viewBox="0 0 10 10"><defs><radialGradient id="s1" cx="0.38" cy="0.32" r="0.75"><stop offset="0" stop-color="#fff"/><stop offset="0.35" stop-color="#9a9a9a"/><stop offset="1" stop-color="#1e1e1e"/></radialGradient></defs><circle cx="5" cy="5" r="4.2" fill="url(#s1)" stroke="#111" stroke-width="0.4"/><path d="M9.2 8.2V9.6H7.8Z" fill="#333"/></svg>
<svg style="left:307px;top:68px" width="12" height="12"><rect x="0.30" y="0.00" width="11.20" height="11.40" fill="#d9dce4"/></svg>
<svg class="b" style="left:307.9px;top:68.9px;" width="9.6" height="9.6" viewBox="0 0 10 10"><defs><radialGradient id="s2" cx="0.38" cy="0.32" r="0.75"><stop offset="0" stop-color="#fff"/><stop offset="0.35" stop-color="#b5b5b5"/><stop offset="1" stop-color="#2a2a2a"/></radialGradient></defs><circle cx="5" cy="5" r="4.2" fill="url(#s2)" stroke="#111" stroke-width="0.4"/><path d="M9.2 8.2V9.6H7.8Z" fill="#333"/></svg>
<svg class="b" style="left:319.7px;top:68.9px;" width="9.6" height="9.6" viewBox="0 0 10 10"><defs><radialGradient id="s3" cx="0.38" cy="0.32" r="0.75"><stop offset="0" stop-color="#fff"/><stop offset="0.35" stop-color="#3a6ae8"/><stop offset="1" stop-color="#0a1a6a"/></radialGradient></defs><circle cx="5" cy="5" r="4.2" fill="url(#s3)" stroke="#08104a" stroke-width="0.4"/><path d="M9.2 8.2V9.6H7.8Z" fill="#333"/></svg>
<svg class="b" style="left:333.4px;top:68.9px;" width="9.6" height="9.6" viewBox="0 0 10 10"><path d="M2.4 1.2L8.6 3L5.8 5.4V8.4L4.6 7.4V4.8Z" fill="#f0a020" stroke="#8a5208" stroke-width="0.4"/><path d="M9.2 8.2V9.6H7.8Z" fill="#333"/></svg>
<svg class="b" style="left:343.2px;top:68.9px;" width="9.6" height="9.6" viewBox="0 0 10 10"><circle cx="5" cy="5" r="3.4" fill="#e0b040" stroke="#5a4008" stroke-width="0.6"/><path d="M5 0.4V9.6M0.4 5H9.6M1.7 1.7L8.3 8.3M8.3 1.7L1.7 8.3" stroke="#5a4008" stroke-width="1.2" stroke-dasharray="1.4 6.4 1.4 0"/><circle cx="5" cy="5" r="1.3" fill="#ecedf1" stroke="#5a4008" stroke-width="0.5"/></svg>
<svg class="b" style="left:355.4px;top:68.9px;" width="9.6" height="9.6" viewBox="0 0 10 10"><rect x="0.6" y="0.8" width="3.6" height="3" fill="#fff" stroke="#333" stroke-width="0.6"/><path d="M4.2 2.3H6.4V6.6H8" fill="none" stroke="#333" stroke-width="0.7"/><rect x="6.6" y="5.4" width="2.6" height="2.6" fill="#333"/><path d="M9.2 8.2V9.6H7.8Z" fill="#333"/></svg>
<svg class="b" style="left:366.4px;top:68.9px;" width="9.6" height="9.6" viewBox="0 0 10 10"><defs><radialGradient id="gl" cx="0.4" cy="0.35" r="0.7"><stop offset="0" stop-color="#b4d4a4"/><stop offset="1" stop-color="#3c6c3c"/></radialGradient></defs><circle cx="5" cy="5" r="4.4" fill="url(#gl)" stroke="#444" stroke-width="0.5"/><path d="M2 3.4C3.4 2.4 4.6 3.6 4 4.8C3.6 5.8 2.6 5.6 2 6.6Z M5.8 5.2C7.2 4.6 8.2 5.6 7.4 6.8C6.8 7.6 5.8 7 5.8 5.2Z" fill="#e8f0e0" opacity="0.7"/><path d="M9.2 8.2V9.6H7.8Z" fill="#333"/></svg>
<svg class="b" style="left:377.9px;top:68.9px;" width="9.6" height="9.6" viewBox="0 0 10 10"><defs><radialGradient id="hp" cx="0.4" cy="0.3" r="0.8"><stop offset="0" stop-color="#6a9aff"/><stop offset="1" stop-color="#0a2a9a"/></radialGradient></defs><circle cx="5" cy="5" r="4.3" fill="url(#hp)" stroke="#081a6a" stroke-width="0.4"/><path d="M3.5 3.8C3.5 1.8 6.6 1.8 6.6 3.7C6.6 4.9 5 4.9 5 6.2" fill="none" stroke="#fff" stroke-width="1"/><circle cx="5" cy="7.7" r="0.65" fill="#fff"/><path d="M9.2 8.2V9.6H7.8Z" fill="#333"/></svg>
<svg class="b" style="left:1.7px;top:91.7px;" width="9.8" height="9.8" viewBox="0 0 10 10"><path d="M3.2 1.6V7.6L4.6 6.4L5.6 8.6L6.4 8.2L5.5 6H7.3Z" fill="#fff" stroke="#444" stroke-width="0.55"/></svg>
<svg class="b" style="left:13.4px;top:91.7px;" width="9.8" height="9.8" viewBox="0 0 10 10"><path d="M4.4 3.4L5.6 4.6L4.4 5.8L3.2 4.6Z" fill="#fff" stroke="#666" stroke-width="0.5"/><path d="M9.8 8.4V10H8.2Z" fill="#333"/></svg>
<svg class="b" style="left:1.7px;top:103.37px;" width="9.8" height="9.8" viewBox="0 0 10 10"><path d="M1 8.6L4.2 1.6L8.6 7.8" fill="none" stroke="#3a3f47" stroke-width="0.7"/><circle cx="1" cy="8.6" r="0.7" fill="#333"/><circle cx="4.2" cy="1.6" r="0.7" fill="#333"/><circle cx="8.6" cy="7.8" r="0.7" fill="#333"/><path d="M9.8 8.4V10H8.2Z" fill="#333"/></svg>
<svg class="b" style="left:13.4px;top:103.37px;" width="9.8" height="9.8" viewBox="0 0 10 10"><path d="M1 2.2H7.2L8.6 8.6M1 7.6H7.4" fill="none" stroke="#3a3f47" stroke-width="0.7"/><rect x="0.2" y="1.4" width="1.6" height="1.6" fill="#333"/><rect x="0.2" y="6.8" width="1.6" height="1.6" fill="#333"/><rect x="6.6" y="0.6" width="1.6" height="1.6" fill="#fff" stroke="#333" stroke-width="0.4"/><rect x="7.6" y="7.8" width="1.8" height="1.8" fill="#333"/><path d="M9.8 8.4V10H8.2Z" fill="#333"/></svg>
<svg class="b" style="left:1.7px;top:115.04px;" width="9.8" height="9.8" viewBox="0 0 10 10"><circle cx="4.6" cy="5" r="3.9" fill="none" stroke="#3a3f47" stroke-width="0.7"/><path d="M4.6 5L7 2.6" stroke="#3a3f47" stroke-width="0.7"/><circle cx="4.6" cy="5" r="0.6" fill="#333"/><path d="M9.8 8.4V10H8.2Z" fill="#333"/></svg>
<svg class="b" style="left:13.4px;top:115.04px;" width="9.8" height="9.8" viewBox="0 0 10 10"><ellipse cx="4.8" cy="5.2" rx="4.2" ry="2.8" fill="none" stroke="#3a3f47" stroke-width="0.7"/><circle cx="4.8" cy="5.2" r="0.9" fill="#333"/><path d="M4.8 1.2V2.6" stroke="#333" stroke-width="0.7"/><path d="M9.8 8.4V10H8.2Z" fill="#333"/></svg>
<svg class="b" style="left:1.7px;top:126.71px;" width="9.8" height="9.8" viewBox="0 0 10 10"><path d="M1.4 1L8.4 5.2L1.8 9.2Z" fill="none" stroke="#3a3f47" stroke-width="0.7"/><circle cx="1.4" cy="1" r="0.6" fill="#333"/><circle cx="1.8" cy="9.2" r="0.6" fill="#333"/><path d="M9.8 8.4V10H8.2Z" fill="#333"/></svg>
<svg class="b" style="left:13.4px;top:126.71px;" width="9.8" height="9.8" viewBox="0 0 10 10"><rect x="1" y="2.4" width="7.8" height="5.4" fill="none" stroke="#3a3f47" stroke-width="0.7"/><rect x="0.3" y="1.7" width="1.4" height="1.4" fill="#333"/><rect x="8.1" y="7.1" width="1.4" height="1.4" fill="#333"/><path d="M9.8 8.4V10H8.2Z" fill="#333"/></svg>
<svg class="b" style="left:1.7px;top:138.38px;" width="9.8" height="9.8" viewBox="0 0 10 10"><circle cx="4.6" cy="4.8" r="3.6" fill="#f6f7f9" stroke="#6a6f77" stroke-width="0.6"/><path d="M4.6 4.8H6.8" stroke="#6a6f77" stroke-width="0.6"/><circle cx="4.6" cy="4.8" r="0.5" fill="#555"/><path d="M9.8 8.4V10H8.2Z" fill="#333"/></svg>
<svg class="b" style="left:13.4px;top:138.38px;" width="9.8" height="9.8" viewBox="0 0 10 10"><path d="M1.2 1.6C5.6 1 8 3.6 8 8" fill="none" stroke="#1a1a1a" stroke-width="1.1"/><path d="M6.6 7L8 9.6L9.4 7Z" fill="#1a1a1a"/><circle cx="1.2" cy="1.6" r="0.8" fill="#1a1a1a"/><path d="M9.8 8.4V10H8.2Z" fill="#333"/></svg>
<svg class="b" style="left:1.7px;top:150.05px;" width="9.8" height="9.8" viewBox="0 0 10 10"><path d="M2 2.2L7.6 1L6.4 7.4L1.4 8.4Z" fill="#4a6ce0" stroke="#22388f" stroke-width="0.5"/><path d="M3.4 3L6.2 2.6L5.6 6.2L3 6.8Z" fill="#a4b8f8"/><circle cx="2" cy="2.2" r="0.8" fill="#333"/><circle cx="7.6" cy="1" r="0.8" fill="#333"/><circle cx="6.4" cy="7.4" r="0.8" fill="#333"/><circle cx="1.4" cy="8.4" r="0.8" fill="#333"/><path d="M9.8 8.4V10H8.2Z" fill="#333"/></svg>
<svg class="b" style="left:13.4px;top:150.05px;" width="9.8" height="9.8" viewBox="0 0 10 10"><path d="M1.6 3C3 0.8 6.6 0.8 8.2 3.4C9 5.4 8.2 7.6 6.6 9L5.4 5.8L2.8 4.6Z" fill="#f4f5f8" stroke="#5a5f67" stroke-width="0.5"/><path d="M4 2.4C6 1.6 8 3.4 7.6 6L5.4 5.8L4.4 4.4Z" fill="#4a6ce0"/><path d="M9.8 8.4V10H8.2Z" fill="#333"/></svg>
<svg class="b" style="left:1.7px;top:161.72px;" width="9.8" height="9.8" viewBox="0 0 10 10"><path d="M1 3L5.6 1.6L9 3V7.6L4.6 9.2L1 7.6Z" fill="#4a6ce0" stroke="#22388f" stroke-width="0.4"/><path d="M1 3L4.6 4.4L9 3L5.6 1.6Z" fill="#a4b8f8"/><path d="M4.6 4.4V9.2L9 7.6V3Z" fill="#2a48b8"/><path d="M9.8 8.4V10H8.2Z" fill="#333"/></svg>
<svg class="b" style="left:13.4px;top:161.72px;" width="9.8" height="9.8" viewBox="0 0 10 10"><defs><radialGradient id="bs" cx="0.35" cy="0.3" r="0.8"><stop offset="0" stop-color="#b8c8ff"/><stop offset="0.5" stop-color="#4a6ce0"/><stop offset="1" stop-color="#14246e"/></radialGradient></defs><circle cx="6.4" cy="3.4" r="2.9" fill="url(#bs)"/><circle cx="3.4" cy="6.4" r="2.9" fill="url(#bs)"/><circle cx="7" cy="7.2" r="1.8" fill="url(#bs)"/><path d="M9.8 8.4V10H8.2Z" fill="#333"/></svg>
<svg class="b" style="left:1.7px;top:173.39px;" width="9.8" height="9.8" viewBox="0 0 10 10"><ellipse cx="5" cy="1.6" rx="1.8" ry="0.9" fill="#e8eaee" stroke="#9a9fa7" stroke-width="0.4"/><path d="M0.8 4.4C3 5.6 7 5.6 9.2 4.4V8C7 9.4 3 9.4 0.8 8Z" fill="#4a6ce0" stroke="#22388f" stroke-width="0.4"/><ellipse cx="5" cy="6.8" rx="2.6" ry="1.1" fill="#f0f2f8"/><path d="M9.8 8.4V10H8.2Z" fill="#333"/></svg>
<svg class="b" style="left:13.4px;top:173.39px;" width="9.8" height="9.8" viewBox="0 0 10 10"><path d="M1 6L5.4 0.8L9.2 3.8L4.8 9.2Z" fill="#4a6ce0" stroke="#22388f" stroke-width="0.4"/><path d="M2.4 4.4L6.6 7.2M3.8 2.8L8 5.6M3.2 7.6L7.4 2.4" stroke="#a4b8f8" stroke-width="0.5"/><path d="M9.8 8.4V10H8.2Z" fill="#333"/></svg>
<svg class="b" style="left:1.7px;top:185.06px;" width="9.8" height="9.8" viewBox="0 0 10 10"><path d="M3 1.4H5.2V2.6H7V4.6H5.6V6H3V4.6H1.2V2.6H3Z" fill="#f2a81c" stroke="#8a5a08" stroke-width="0.5"/><path d="M4.6 5L8 6.6L8.6 9L6 8.6L4 6.4Z" fill="#f4f5f8" stroke="#5a5f67" stroke-width="0.5"/></svg>
<svg class="b" style="left:13.4px;top:185.06px;" width="9.8" height="9.8" viewBox="0 0 10 10"><path d="M9 0.6L5.8 4.2L9.2 4.6L5.4 6.4L6.4 9.4L3.6 7.2L0.6 9.2L2 5.4L0.8 3.2L4 4Z" fill="#f5a51a" stroke="#b06a08" stroke-width="0.3"/><path d="M9 0.6L4.6 5.6" stroke="#ffe070" stroke-width="0.8"/></svg>
<svg class="b" style="left:1.7px;top:196.73px;" width="9.8" height="9.8" viewBox="0 0 10 10"><path d="M4.6 0.8H6.8L6.2 5H4.2Z" fill="#22388f"/><path d="M0.8 5H7.4V7H0.8Z" fill="#f4f5f8" stroke="#5a5f67" stroke-width="0.5"/><path d="M5.4 7L7.6 9.2" stroke="#5a5f67" stroke-width="0.6"/></svg>
<svg class="b" style="left:13.4px;top:196.73px;" width="9.8" height="9.8" viewBox="0 0 10 10"><path d="M5 0.8H7.4V5H5Z" fill="#22388f"/><path d="M0.8 5H9V7H0.8Z" fill="#f4f5f8" stroke="#3a3f47" stroke-width="0.5"/></svg>
<svg class="b" style="left:1.7px;top:208.4px;" width="9.8" height="9.8" viewBox="0 0 10 10"><path d="M4.4 0.8C6.4 2.4 8 4.4 8 6C8 8 6.4 9 4.4 9C2.4 9 0.8 8 0.8 6C0.8 4.4 2.4 2.4 4.4 0.8Z" fill="#16161e"/><circle cx="3.2" cy="6.2" r="1.5" fill="#f4f5f8"/><circle cx="5.9" cy="6.4" r="1.4" fill="#2a3cc0"/><path d="M9.8 8.4V10H8.2Z" fill="#333"/></svg>
<svg class="b" style="left:13.4px;top:208.4px;" width="9.8" height="9.8" viewBox="0 0 10 10"><circle cx="4.6" cy="2.4" r="1.6" fill="#a4b8f8" stroke="#5a6aa8" stroke-width="0.4"/><circle cx="2.8" cy="6.4" r="1.9" fill="#f4f5f8" stroke="#7a7f87" stroke-width="0.4"/><circle cx="7" cy="6.8" r="1.7" fill="#16228a"/></svg>
<svg class="b" style="left:1.7px;top:220.07px;" width="9.8" height="9.8" viewBox="0 0 10 10"><path d="M0.8 2.6C4.6 1.6 7.4 4 7.4 8.6" fill="none" stroke="#2a2a2a" stroke-width="1"/><path d="M0.6 1.4L3 2.4L0.8 4Z" fill="#2a2a2a"/></svg>
<svg class="b" style="left:13.4px;top:220.07px;" width="9.8" height="9.8" viewBox="0 0 10 10"><path d="M0.8 2.8C4.4 2 7 4.4 7.4 8.6" fill="none" stroke="#5a5f67" stroke-width="0.8"/><path d="M2.4 0.6L4.6 2.6M1.6 3.6L3.8 1.4M6 6.4L9 8.4M6.4 9L8.6 6" stroke="#5a5f67" stroke-width="0.6"/><path d="M9.8 8.4V10H8.2Z" fill="#333"/></svg>
<svg class="b" style="left:1.7px;top:231.74px;" width="9.8" height="9.8" viewBox="0 0 10 10"><path d="M0.8 1H9V3.6H6.6V9.4H3.4V3.6H0.8Z" fill="#4a6ce0" stroke="#22388f" stroke-width="0.5"/><path d="M1.4 1.6H8.4" stroke="#a4b8f8" stroke-width="0.8"/></svg>
<svg class="b" style="left:13.4px;top:231.74px;" width="9.8" height="9.8" viewBox="0 0 10 10"><path d="M2 7.6L7.6 1.8" stroke="#5a5f67" stroke-width="0.5" stroke-dasharray="0.9 0.7"/><rect x="0.8" y="6.2" width="2.6" height="2.6" fill="#f4f5f8" stroke="#3a3f47" stroke-width="0.5"/><rect x="6.2" y="0.6" width="2.4" height="2.4" fill="#4a6ce0" stroke="#22388f" stroke-width="0.4"/><path d="M9.8 8.4V10H8.2Z" fill="#333"/></svg>
<svg class="b" style="left:1.7px;top:243.41px;" width="9.8" height="9.8" viewBox="0 0 10 10"><rect x="0.6" y="0.8" width="3" height="2.6" fill="#4a6ce0" stroke="#22388f" stroke-width="0.4"/><rect x="0.6" y="6.2" width="3" height="2.6" fill="#4a6ce0" stroke="#22388f" stroke-width="0.4"/><rect x="5.8" y="1.2" width="3.2" height="2.8" fill="#4a6ce0" stroke="#22388f" stroke-width="0.4"/><rect x="5.4" y="5.8" width="3.4" height="3" fill="#4a6ce0" stroke="#22388f" stroke-width="0.4"/><path d="M3.6 2.2H5.8M3.6 7.4H5.4M4.6 2.2V7.4" stroke="#333" stroke-width="0.5"/></svg>
<svg class="b" style="left:13.4px;top:243.41px;" width="9.8" height="9.8" viewBox="0 0 10 10"><rect x="0.8" y="1" width="2.4" height="6.4" fill="#f4f5f8" stroke="#3a3f47" stroke-width="0.5"/><path d="M4.4 7L8 3L9.4 4.4L5.8 8.4Z" fill="#4a6ce0" stroke="#22388f" stroke-width="0.4"/><path d="M5.6 3.8L7.4 2" stroke="#3a3f47" stroke-width="0.5"/></svg>
<svg class="b" style="left:1.7px;top:255.08px;" width="9.8" height="9.8" viewBox="0 0 10 10"><path d="M0.8 3.2L4 0.8H9.2V6.6L6.4 9.4H0.8Z" fill="#4a6ce0" stroke="#22388f" stroke-width="0.5"/><path d="M0.8 3.2H6.4L9.2 0.8M6.4 3.2V9.4" stroke="#22388f" stroke-width="0.4" fill="none"/><rect x="2" y="5.6" width="3.2" height="3.8" fill="#f4f5f8"/><path d="M9.8 8.4V10H8.2Z" fill="#333"/></svg>
<svg class="b" style="left:13.4px;top:255.08px;" width="9.8" height="9.8" viewBox="0 0 10 10"><path d="M1 3.4V1M3.6 3.4V1M6.2 3.4V1M8.8 3.4V1" stroke="#3a3f47" stroke-width="0.6" stroke-dasharray="0.8 0.5"/><path d="M0.6 5H9.2" stroke="#3a3f47" stroke-width="0.6"/><path d="M0.6 7.4C3 6.2 7 6.2 9.4 7.4" fill="none" stroke="#4a6ce0" stroke-width="1.2"/><path d="M9.8 8.4V10H8.2Z" fill="#333"/></svg>
<svg class="b" style="left:1.7px;top:266.75px;" width="9.8" height="9.8" viewBox="0 0 10 10"><path d="M1.2 0.8V9.2M3.8 0.8V9.2M6.4 0.8V9.2" stroke="#4a6ce0" stroke-width="1.3"/><path d="M1.2 0.8V9.2M3.8 0.8V9.2M6.4 0.8V9.2" stroke="#22388f" stroke-width="0.4" stroke-dasharray="1.2 1"/><path d="M8.4 1V9" stroke="#3a3f47" stroke-width="0.5"/><path d="M9.8 8.4V10H8.2Z" fill="#333"/></svg>
<svg class="b" style="left:13.4px;top:266.75px;" width="9.8" height="9.8" viewBox="0 0 10 10"><path d="M2.4 0.8H6.8M2.4 9.2H6.8M4.6 0.8V9.2" stroke="#3a3f47" stroke-width="0.6"/><rect x="2.6" y="3.2" width="4" height="3.6" fill="#f4f5f8" stroke="#c02a20" stroke-width="0.8"/><path d="M4.6 3.2V6.8" stroke="#c02a20" stroke-width="0.6"/><path d="M9.8 8.4V10H8.2Z" fill="#333"/></svg>
<svg class="b" style="left:1.7px;top:278.42px;" width="9.8" height="9.8" viewBox="0 0 10 10"><path d="M1 1.8L3.4 1.2V8.2L1 8.8Z" fill="#f4f5f8" stroke="#3a3f47" stroke-width="0.5"/><path d="M4.6 2L8 1.2L7 8.6L3.6 9.4Z" fill="#4a6ce0" stroke="#22388f" stroke-width="0.5"/><path d="M5.4 2.6L7.2 2.2L6.4 8L4.6 8.4Z" fill="#a4b8f8"/><path d="M9.8 8.4V10H8.2Z" fill="#333"/></svg>
<svg class="b" style="left:13.4px;top:278.42px;" width="9.8" height="9.8" viewBox="0 0 10 10"><path d="M1 5.6L3.4 8.2L8.8 1.4" fill="none" stroke="#111" stroke-width="1.2"/><path d="M9.8 8.4V10H8.2Z" fill="#333"/></svg>
<svg class="b" style="left:1.7px;top:290.09px;" width="9.8" height="9.8" viewBox="0 0 10 10"><path d="M0.8 3.8L3.2 2H7.6L8.4 4.2V7.8H0.8Z" fill="#e6e8ec" stroke="#3a3f47" stroke-width="0.6"/><path d="M0.8 3.8H5.6V7.8M5.6 3.8L7.6 2" fill="none" stroke="#3a3f47" stroke-width="0.5"/><circle cx="3.2" cy="5.8" r="1.1" fill="none" stroke="#3a3f47" stroke-width="0.5"/><path d="M9.8 8.4V10H8.2Z" fill="#333"/></svg>
<svg class="b" style="left:13.4px;top:290.09px;" width="9.8" height="9.8" viewBox="0 0 10 10"><path d="M4.6 3.6L8.6 7.6L4.6 9.4L0.8 7.4Z" fill="#f5a51a" stroke="#a86408" stroke-width="0.4"/><path d="M4.6 3.6L4.6 9.4L0.8 7.4Z" fill="#ffd060"/><path d="M4.6 3.4L6 1H8.6V3" fill="none" stroke="#222" stroke-width="0.7"/><path d="M9.8 8.4V10H8.2Z" fill="#333"/></svg>
</div></body></html>
